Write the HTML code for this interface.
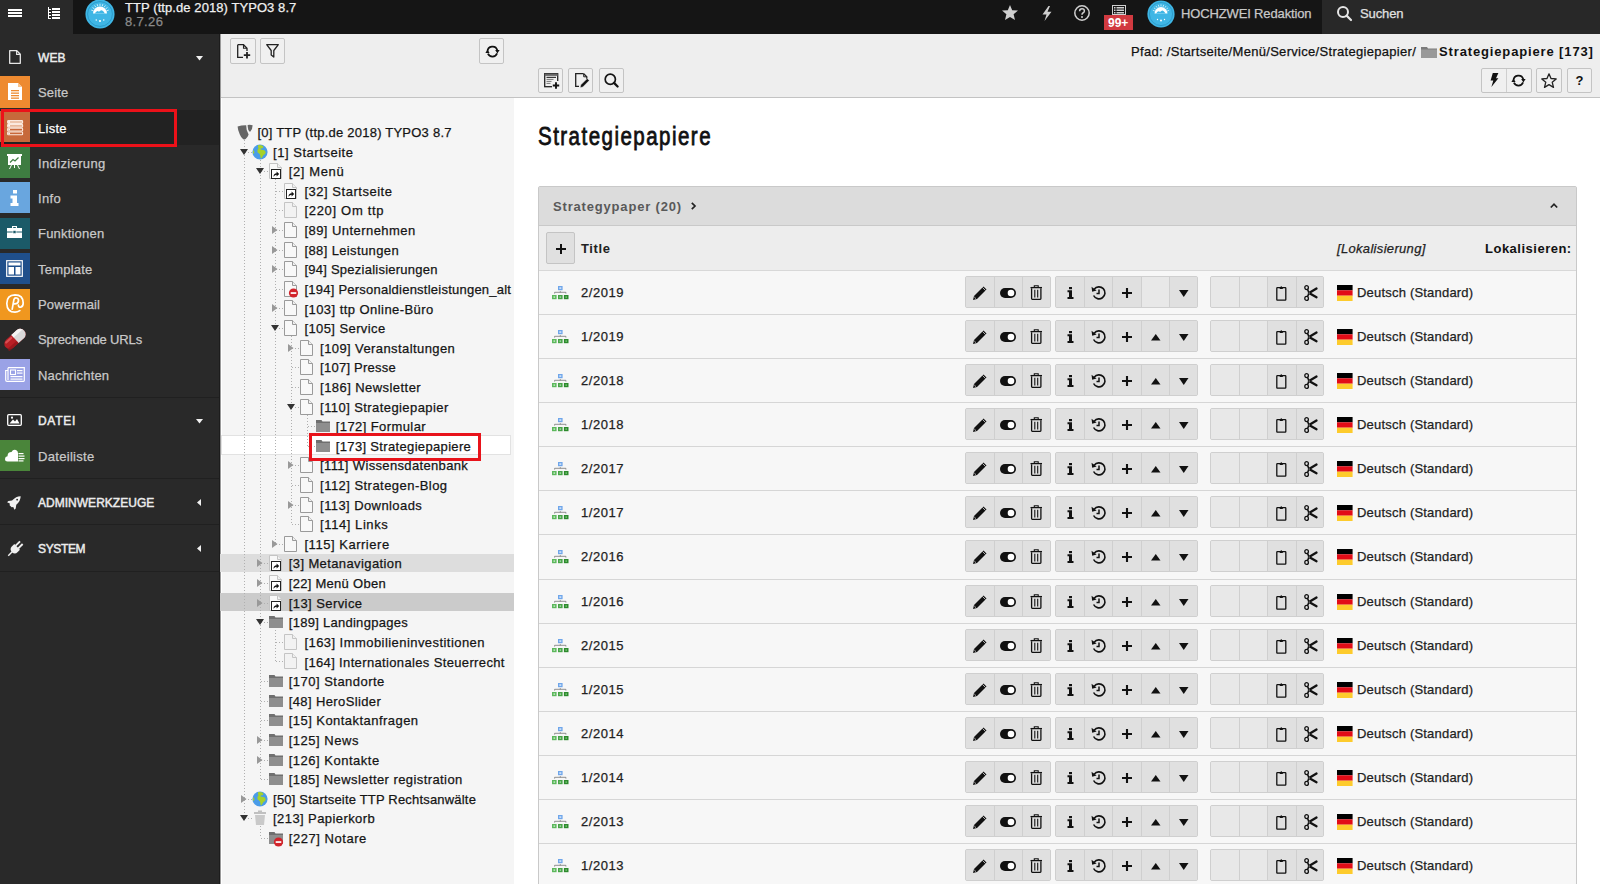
<!DOCTYPE html><html><head><meta charset="utf-8"><title>TYPO3</title><style>
*{box-sizing:border-box}
html,body{margin:0;padding:0}
body{width:1600px;height:884px;overflow:hidden;position:relative;background:#fff;font-family:"Liberation Sans",sans-serif;}
.a{position:absolute}
.t{position:absolute;white-space:nowrap;line-height:1;font-family:"Liberation Sans",sans-serif;-webkit-text-stroke:0.25px currentColor}
svg{position:absolute;overflow:visible}
.b{position:absolute;background:#ededed;border:1px solid #c6c6c6;border-radius:2px}
</style></head><body>
<div class="a" style="left:0px;top:0px;width:1600px;height:34px;background:#151515;"></div>
<div class="a" style="left:0px;top:0px;width:73px;height:34px;background:#292929;"></div>
<div class="a" style="left:1322px;top:0px;width:278px;height:34px;background:#282828;"></div>
<svg style="left:8px;top:9px" width="14" height="8" viewBox="0 0 14 8"><rect x="0" y="0" width="14" height="2" fill="#fff"/><rect x="0" y="3" width="14" height="2" fill="#fff"/><rect x="0" y="6" width="14" height="2" fill="#fff"/></svg>
<svg style="left:48px;top:7px" width="12" height="12" viewBox="0 0 12 12"><rect x="0" y="0" width="1" height="12" fill="#fff"/><rect x="1" y="2" width="2" height="1" fill="#fff"/><rect x="1" y="5" width="2" height="1" fill="#fff"/><rect x="1" y="8" width="2" height="1" fill="#fff"/><rect x="1" y="11" width="2" height="1" fill="#fff"/><rect x="4" y="1" width="8" height="2" fill="#fff"/><rect x="4" y="4" width="8" height="2" fill="#fff"/><rect x="4" y="7" width="8" height="2" fill="#fff"/><rect x="4" y="10" width="8" height="2" fill="#fff"/></svg>
<svg style="left:85px;top:-1px" width="30" height="30" viewBox="0 0 30 30"><g transform="scale(1.0714)"><circle cx="14" cy="14" r="13.6" fill="#3fb6e5"/><circle cx="14" cy="14" r="11.6" fill="none" stroke="#2a98c8" stroke-width="0.9"/><path d="M7.82 10.99 L5.82 10.34" stroke="#fff" stroke-width="0.8" opacity="0.85"/><path d="M8.74 9.18 L7.04 7.95" stroke="#fff" stroke-width="0.8" opacity="0.85"/><path d="M10.18 7.74 L8.95 6.04" stroke="#fff" stroke-width="0.8" opacity="0.85"/><path d="M11.99 6.82 L11.34 4.82" stroke="#fff" stroke-width="0.8" opacity="0.85"/><path d="M14.00 6.50 L14.00 4.40" stroke="#fff" stroke-width="0.8" opacity="0.85"/><path d="M16.01 6.82 L16.66 4.82" stroke="#fff" stroke-width="0.8" opacity="0.85"/><path d="M17.82 7.74 L19.05 6.04" stroke="#fff" stroke-width="0.8" opacity="0.85"/><path d="M19.26 9.18 L20.96 7.95" stroke="#fff" stroke-width="0.8" opacity="0.85"/><path d="M20.18 10.99 L22.18 10.34" stroke="#fff" stroke-width="0.8" opacity="0.85"/><path d="M7.5 13.5 A6.5 6.5 0 0 1 20.5 13.5 Z" fill="#fff"/><path d="M9 13.6 Q11.5 9.8 13 12 Q15.5 9 17.5 12 L18.5 13.6 Z" fill="#3fb6e5"/><circle cx="10.5" cy="19.5" r="0.7" fill="#fff"/><circle cx="14" cy="20.5" r="1" fill="#fff"/><circle cx="17.5" cy="19.5" r="0.7" fill="#fff"/></g></svg>
<div class="t" style="left:125px;top:1.05px;font-size:13px;color:#f0f0f0;font-weight:normal;letter-spacing:0.077px;">TTP (ttp.de 2018) TYPO3 8.7</div>
<div class="t" style="left:125px;top:15.25px;font-size:13px;color:#8a8a8a;font-weight:normal;letter-spacing:0.35px;">8.7.26</div>
<svg style="left:1002px;top:5px" width="16" height="15" viewBox="0 0 16 15"><path d="M8 0 L10.2 5.2 L16 5.6 L11.6 9.3 L13 15 L8 11.9 L3 15 L4.4 9.3 L0 5.6 L5.8 5.2 Z" fill="#cfcfcf"/></svg>
<svg style="left:1042px;top:6px" width="10" height="15" viewBox="0 0 10 15"><path d="M6.5 0 L0.5 8.5 L4.5 8.5 L2.5 15 L9.5 5.8 L5.5 5.8 L8 0 Z" fill="#cfcfcf"/></svg>
<svg style="left:1074px;top:5px" width="16" height="16" viewBox="0 0 16 16"><circle cx="8" cy="8" r="7.2" fill="none" stroke="#cfcfcf" stroke-width="1.5"/><path d="M5.6 6.2 Q5.6 3.8 8 3.8 Q10.4 3.8 10.4 6 Q10.4 7.3 8.9 8 Q8 8.5 8 9.8" fill="none" stroke="#cfcfcf" stroke-width="1.5"/><circle cx="8" cy="12" r="1" fill="#cfcfcf"/></svg>
<svg style="left:1112px;top:5px" width="14" height="10" viewBox="0 0 14 10"><rect x="0.5" y="0.5" width="13" height="9" fill="none" stroke="#cfcfcf" stroke-width="1"/><rect x="2" y="2" width="1.5" height="1.5" fill="#cfcfcf"/><rect x="4.5" y="2" width="7.5" height="1.5" fill="#cfcfcf"/><rect x="2" y="4.5" width="1.5" height="1.5" fill="#cfcfcf"/><rect x="4.5" y="4.5" width="7.5" height="1.5" fill="#cfcfcf"/><rect x="2" y="7" width="1.5" height="1.5" fill="#cfcfcf"/><rect x="4.5" y="7" width="7.5" height="1.5" fill="#cfcfcf"/></svg>
<div class="a" style="left:1104px;top:15px;width:29px;height:15px;background:#d13a40;"></div>
<div class="t" style="left:1108px;top:17.20px;font-size:12px;color:#fff;font-weight:bold;letter-spacing:0px;-webkit-text-stroke:0;">99+</div>
<svg style="left:1147px;top:-0.5px" width="28" height="28" viewBox="0 0 28 28"><g transform="scale(1.0000)"><circle cx="14" cy="14" r="13.6" fill="#3fb6e5"/><circle cx="14" cy="14" r="11.6" fill="none" stroke="#2a98c8" stroke-width="0.9"/><path d="M7.82 10.99 L5.82 10.34" stroke="#fff" stroke-width="0.8" opacity="0.85"/><path d="M8.74 9.18 L7.04 7.95" stroke="#fff" stroke-width="0.8" opacity="0.85"/><path d="M10.18 7.74 L8.95 6.04" stroke="#fff" stroke-width="0.8" opacity="0.85"/><path d="M11.99 6.82 L11.34 4.82" stroke="#fff" stroke-width="0.8" opacity="0.85"/><path d="M14.00 6.50 L14.00 4.40" stroke="#fff" stroke-width="0.8" opacity="0.85"/><path d="M16.01 6.82 L16.66 4.82" stroke="#fff" stroke-width="0.8" opacity="0.85"/><path d="M17.82 7.74 L19.05 6.04" stroke="#fff" stroke-width="0.8" opacity="0.85"/><path d="M19.26 9.18 L20.96 7.95" stroke="#fff" stroke-width="0.8" opacity="0.85"/><path d="M20.18 10.99 L22.18 10.34" stroke="#fff" stroke-width="0.8" opacity="0.85"/><path d="M7.5 13.5 A6.5 6.5 0 0 1 20.5 13.5 Z" fill="#fff"/><path d="M9 13.6 Q11.5 9.8 13 12 Q15.5 9 17.5 12 L18.5 13.6 Z" fill="#3fb6e5"/><circle cx="10.5" cy="19.5" r="0.7" fill="#fff"/><circle cx="14" cy="20.5" r="1" fill="#fff"/><circle cx="17.5" cy="19.5" r="0.7" fill="#fff"/></g></svg>
<div class="t" style="left:1181px;top:7.35px;font-size:13px;color:#c8c8c8;font-weight:normal;letter-spacing:-0.14px;">HOCHZWEI Redaktion</div>
<svg style="left:1337px;top:6px" width="15" height="15" viewBox="0 0 15 15"><circle cx="6" cy="6" r="5" fill="none" stroke="#e6e6e6" stroke-width="2"/><path d="M9.6 9.6 L14 14" stroke="#e6e6e6" stroke-width="2.2" stroke-linecap="round"/></svg>
<div class="t" style="left:1360px;top:7.35px;font-size:13px;color:#e0e0e0;font-weight:normal;letter-spacing:-0.1px;">Suchen</div>
<div class="a" style="left:0px;top:34px;width:220px;height:850px;background:#292929;"></div>
<div class="t" style="left:38px;top:52.20px;font-size:12px;color:#ececec;font-weight:normal;letter-spacing:0.05px;-webkit-text-stroke:0.45px #ececec">WEB</div>
<svg style="left:9px;top:50px" width="12" height="14" viewBox="0 0 12 14"><path d="M0.7 0.7 H7.8 L11.3 4.2 V13.3 H0.7 Z" fill="none" stroke="#e6e6e6" stroke-width="1.3" stroke-linejoin="round"/><path d="M7.6 0.9 V4.4 H11.1" fill="none" stroke="#e6e6e6" stroke-width="1.1"/></svg>
<svg style="left:195.5px;top:56px" width="7" height="4.5" viewBox="0 0 7 4.5"><path d="M0 0 L7 0 L3.5 4.5 Z" fill="#f0f0f0"/></svg>
<div class="a" style="left:0px;top:76px;width:30px;height:32px;background:#ee8a30;"></div>
<svg style="left:8px;top:83px" width="14" height="17" viewBox="0 0 14 17"><path d="M0 0 H10 L14 4 V17 H0 Z" fill="#fff"/><path d="M10 0 V4 H14 Z" fill="#f7c48f"/><rect x="3" y="7" width="8" height="1.3" fill="#ee8a30"/><rect x="3" y="9.5" width="8" height="1.3" fill="#ee8a30"/><rect x="3" y="12" width="8" height="1.3" fill="#ee8a30"/><rect x="3" y="14.5" width="8" height="1.3" fill="#ee8a30"/></svg>
<div class="t" style="left:38px;top:86.05px;font-size:13px;color:#c8c8c8;font-weight:normal;letter-spacing:0.175px;">Seite</div>
<div class="a" style="left:0px;top:110px;width:220px;height:35px;background:#222222;"></div>
<div class="a" style="left:0px;top:111px;width:30px;height:31px;background:#c7693b;"></div>
<svg style="left:7px;top:120px" width="16" height="15" viewBox="0 0 16 15"><rect x="0.6" y="0.6" width="15" height="2.8" rx="0.8" fill="#e9b89c" stroke="#fbe9df" stroke-width="1.1"/><rect x="1.3" y="1.2" width="1.6" height="1.6" fill="#fff"/><rect x="0.6" y="4.4" width="15" height="2.8" rx="0.8" fill="#e9b89c" stroke="#fbe9df" stroke-width="1.1"/><rect x="1.3" y="5.0" width="1.6" height="1.6" fill="#fff"/><rect x="0.6" y="8.2" width="15" height="2.8" rx="0.8" fill="#c9683b" stroke="#fbe9df" stroke-width="1.1"/><rect x="1.3" y="8.8" width="1.6" height="1.6" fill="#fff"/><rect x="0.6" y="12.0" width="15" height="2.8" rx="0.8" fill="#c9683b" stroke="#fbe9df" stroke-width="1.1"/><rect x="1.3" y="12.6" width="1.6" height="1.6" fill="#fff"/></svg>
<div class="t" style="left:38px;top:122.05px;font-size:13px;color:#fff;font-weight:normal;letter-spacing:0.275px;">Liste</div>
<div class="a" style="left:0px;top:147px;width:30px;height:31px;background:#3e7c41;"></div>
<svg style="left:7px;top:154px" width="15" height="17" viewBox="0 0 15 17"><rect x="0" y="0" width="15" height="2" fill="#fff"/><rect x="1" y="2" width="13" height="9" fill="#fff"/><path d="M3 8.5 L6 5.5 L8 7 L11.5 3.5" fill="none" stroke="#3e7c41" stroke-width="1.2"/><path d="M4.5 11 L2.5 15 M10.5 11 L12.5 15 M7.5 11 V14" stroke="#fff" stroke-width="1"/></svg>
<div class="t" style="left:38px;top:157.05px;font-size:13px;color:#c8c8c8;font-weight:normal;letter-spacing:0.37px;">Indizierung</div>
<div class="a" style="left:0px;top:182px;width:30px;height:31px;background:#69a6df;"></div>
<svg style="left:10px;top:190px" width="9" height="16" viewBox="0 0 9 16"><rect x="3" y="0" width="4" height="3.5" fill="#fff"/><path d="M0.5 5.5 H7 V13 H8.5 V16 H0.5 V13 H2.5 V8.5 H0.5 Z" fill="#fff"/></svg>
<div class="t" style="left:38px;top:192.05px;font-size:13px;color:#c8c8c8;font-weight:normal;letter-spacing:0.33px;">Info</div>
<div class="a" style="left:0px;top:218px;width:30px;height:31px;background:#1b5a68;"></div>
<svg style="left:7px;top:226px" width="15" height="12" viewBox="0 0 15 12"><path d="M5 0 H10 V2 H15 V5.5 H0 V2 H5 Z M6.2 1 V2 H8.8 V1 Z" fill="#fff"/><rect x="0" y="6.5" width="15" height="5.5" fill="#fff"/><rect x="6" y="4.5" width="3" height="3" fill="#1b5a68" stroke="#fff" stroke-width="0.6"/></svg>
<div class="t" style="left:38px;top:227.05px;font-size:13px;color:#c8c8c8;font-weight:normal;letter-spacing:0.2px;">Funktionen</div>
<div class="a" style="left:0px;top:253px;width:30px;height:31px;background:#1f4f8b;"></div>
<svg style="left:6px;top:260px" width="17" height="17" viewBox="0 0 17 17"><rect x="0.7" y="0.7" width="15.6" height="15.6" fill="none" stroke="#fff" stroke-width="1.2"/><rect x="2.5" y="2.5" width="12" height="3" fill="#fff"/><rect x="2.5" y="7" width="5.5" height="7.5" fill="#fff"/><rect x="9.5" y="7" width="5" height="7.5" fill="#fff"/></svg>
<div class="t" style="left:38px;top:263.05px;font-size:13px;color:#c8c8c8;font-weight:normal;letter-spacing:0.214px;">Template</div>
<div class="a" style="left:0px;top:289px;width:30px;height:31px;background:#f0971f;"></div>
<svg style="left:5px;top:293px" width="20" height="21" viewBox="0 0 20 21"><path d="M14.8 17.6 Q12.5 19.2 10 19.2 Q2 19.2 1.8 10.5 Q1.8 2 10 1.8 Q18.2 1.8 18.2 10 Q18.2 13.6 15.6 14.2 Q13.6 14.5 13.4 12.2" fill="none" stroke="#fff" stroke-width="1.7" stroke-linecap="round"/><path d="M7.2 16.2 L8.9 6.6 Q9.6 4.6 11.6 5 Q14 5.6 13.4 8.3 Q12.8 11 9.2 10.8" fill="none" stroke="#fff" stroke-width="1.7" stroke-linecap="round" stroke-linejoin="round"/></svg>
<div class="t" style="left:38px;top:298.05px;font-size:13px;color:#c8c8c8;font-weight:normal;letter-spacing:0.162px;">Powermail</div>
<svg style="left:2px;top:326px" width="26" height="26" viewBox="0 0 26 26"><g transform="rotate(-42 13 13)"><rect x="0.5" y="7.6" width="25" height="10.8" rx="5.4" fill="#b81f25"/><path d="M13 7.6 H20.1 A5.4 5.4 0 0 1 20.1 18.4 H13 Z" fill="#d9d9d9"/><path d="M13 7.6 H20.1 A5.4 5.4 0 0 1 25 11 H13 Z" fill="#f4f4f4"/><rect x="3" y="8.6" width="9" height="2.2" rx="1.1" fill="#e05a5e" opacity="0.8"/><rect x="0.5" y="15.5" width="12.5" height="2.9" rx="1.4" fill="#8e1418" opacity="0.7"/></g></svg>
<div class="t" style="left:38px;top:333.05px;font-size:13px;color:#c8c8c8;font-weight:normal;letter-spacing:-0.15px;">Sprechende URLs</div>
<div class="a" style="left:0px;top:359px;width:30px;height:31px;background:#9aa2e6;"></div>
<svg style="left:5px;top:367px" width="20" height="15" viewBox="0 0 20 15"><path d="M3 0.7 H19.3 V13.5 Q19.3 14.3 18.5 14.3 H2 Q0.7 14.3 0.7 13 V3.5 H3" fill="none" stroke="#fff" stroke-width="1.2"/><path d="M3 0.7 V13" stroke="#fff" stroke-width="1.2"/><rect x="5.5" y="3" width="5" height="4.5" fill="none" stroke="#fff" stroke-width="1.1"/><rect x="12" y="3" width="5.5" height="1.2" fill="#fff"/><rect x="12" y="5.5" width="5.5" height="1.2" fill="#fff"/><rect x="5.5" y="9" width="12" height="1.2" fill="#fff"/><rect x="5.5" y="11.5" width="12" height="1.2" fill="#fff"/></svg>
<div class="t" style="left:38px;top:369.05px;font-size:13px;color:#c8c8c8;font-weight:normal;letter-spacing:0.17px;">Nachrichten</div>
<div class="a" style="left:0px;top:397px;width:220px;height:1px;background:#202020;"></div>
<div class="t" style="left:38px;top:415.20px;font-size:12px;color:#ececec;font-weight:normal;letter-spacing:0.7px;-webkit-text-stroke:0.45px #ececec">DATEI</div>
<svg style="left:7px;top:414px" width="15" height="12" viewBox="0 0 15 12"><rect x="0.7" y="0.7" width="13.6" height="10.6" rx="1" fill="none" stroke="#fff" stroke-width="1.3"/><path d="M2.5 9.5 L6 5.5 L8 7.5 L10 5 L12.5 9.5 Z" fill="#fff"/><circle cx="5" cy="3.7" r="1.1" fill="#fff"/></svg>
<svg style="left:195.5px;top:419px" width="7" height="4.5" viewBox="0 0 7 4.5"><path d="M0 0 L7 0 L3.5 4.5 Z" fill="#f0f0f0"/></svg>
<div class="a" style="left:0px;top:440px;width:30px;height:31px;background:#4a853a;"></div>
<svg style="left:5px;top:449px" width="20" height="13" viewBox="0 0 20 13"><path d="M2.5 12.5 Q0 12.5 0 10 Q0 7.5 2.5 7.3 Q2.5 3 6.5 3 Q8 0 11 1 Q13 2 13 4 V12.5 Z" fill="#fff"/><rect x="13.5" y="4" width="5" height="1.2" fill="#fff"/><rect x="13.5" y="6.5" width="6" height="1.2" fill="#fff"/><rect x="13.5" y="9" width="6" height="1.2" fill="#fff"/><rect x="13.5" y="11.3" width="5" height="1.2" fill="#fff"/></svg>
<div class="t" style="left:38px;top:449.65px;font-size:13px;color:#c8c8c8;font-weight:normal;letter-spacing:0.31px;">Dateiliste</div>
<div class="a" style="left:0px;top:478px;width:220px;height:1px;background:#202020;"></div>
<div class="t" style="left:38px;top:497.20px;font-size:12px;color:#ececec;font-weight:normal;letter-spacing:0.02px;-webkit-text-stroke:0.45px #ececec">ADMINWERKZEUGE</div>
<svg style="left:5px;top:492px" width="20" height="20" viewBox="0 0 20 20"><g transform="translate(10 9.8) rotate(45)"><path d="M0 -8 Q3.2 -5 3 1.2 L5.2 4.2 L5.2 6 L2.4 4.9 L1.4 6.2 H-1.4 L-2.4 4.9 L-5.2 6 L-5.2 4.2 L-3 1.2 Q-3.2 -5 0 -8 Z" fill="#f0f0f0"/><circle cx="0" cy="-3" r="0.9" fill="#292929"/></g></svg>
<svg style="left:197.2px;top:498.5px" width="4" height="7" viewBox="0 0 4 7"><path d="M4 0 L4 7 L0 3.5 Z" fill="#f0f0f0"/></svg>
<div class="a" style="left:0px;top:524px;width:220px;height:1px;background:#202020;"></div>
<div class="t" style="left:38px;top:543.20px;font-size:12px;color:#ececec;font-weight:normal;letter-spacing:-0.36px;-webkit-text-stroke:0.45px #ececec">SYSTEM</div>
<svg style="left:5px;top:538px" width="20" height="20" viewBox="0 0 20 20"><g transform="translate(11.4 9.6) rotate(45)"><rect x="-2.8" y="-7" width="1.9" height="6.5" fill="#f0f0f0"/><rect x="0.9" y="-7" width="1.9" height="6.5" fill="#f0f0f0"/><path d="M-4 -1 H4 V2.5 Q4 6 0 6.5 Q-4 6 -4 2.5 Z" fill="#f0f0f0"/><rect x="-0.7" y="6" width="1.4" height="5.5" fill="#f0f0f0"/></g></svg>
<svg style="left:197.2px;top:544.5px" width="4" height="7" viewBox="0 0 4 7"><path d="M4 0 L4 7 L0 3.5 Z" fill="#f0f0f0"/></svg>
<div class="a" style="left:0px;top:571px;width:220px;height:1px;background:#202020;"></div>
<div class="a" style="left:0.6px;top:108.7px;width:176.2px;height:38px;border:3.7px solid #ec1119"></div>
<div class="a" style="left:220px;top:34px;width:294px;height:850px;background:#f5f5f5;"></div>
<div class="a" style="left:220px;top:34px;width:1380px;height:63px;background:#eeeeee;"></div>
<div class="a" style="left:220px;top:97px;width:1380px;height:1px;background:#c3c3c3;"></div>
<div class="a" style="left:219px;top:34px;width:1px;height:850px;background:#1c1c1c;"></div>
<div class="a" style="left:220px;top:34px;width:1px;height:850px;background:#9a9a9a;"></div>
<div class="a" style="left:221px;top:98px;width:1px;height:786px;background:#ffffff;"></div>
<div class="a" style="left:230px;top:38px;width:26px;height:26px;background:#f0f0f0;border:1px solid #c4c4c4;border-radius:2px;"></div>
<svg style="left:237px;top:44px" width="13" height="15" viewBox="0 0 13 15"><path d="M0.7 0.7 H6.5 L10 4.2 V7" fill="none" stroke="#222" stroke-width="1.3"/><path d="M6.5 0.7 V4.2 H10" fill="none" stroke="#222" stroke-width="1.1"/><path d="M0.7 0.7 V13.3 H6" fill="none" stroke="#222" stroke-width="1.3"/><path d="M10 8 V14.5 M6.8 11.2 H13.2" stroke="#222" stroke-width="1.8"/></svg>
<div class="a" style="left:260px;top:38px;width:25px;height:26px;background:#f0f0f0;border:1px solid #c4c4c4;border-radius:2px;"></div>
<svg style="left:266px;top:44px" width="13" height="14" viewBox="0 0 13 14"><path d="M0.7 0.7 H12.3 L7.8 6.5 V13 L5.2 11 V6.5 Z" fill="none" stroke="#222" stroke-width="1.3" stroke-linejoin="round"/></svg>
<div class="a" style="left:479px;top:38px;width:25px;height:26px;background:#f0f0f0;border:1px solid #c4c4c4;border-radius:2px;"></div>
<svg style="left:484.5px;top:44.5px" width="15" height="13" viewBox="0 0 15 13"><path d="M2.5 6.5 A5 5 0 0 1 12.3 5.2" fill="none" stroke="#111" stroke-width="1.7"/><path d="M10.2 5 L14.6 5 L12.4 8.6 Z" fill="#111"/><path d="M12.1 8.4 A5 5 0 0 1 2.9 8.6" fill="none" stroke="#111" stroke-width="1.7"/><path d="M0.4 8 L4.6 8 L2.5 4.4 Z" fill="#111"/></svg>
<div class="a" style="left:538px;top:68px;width:25px;height:25px;background:#f0f0f0;border:1px solid #c4c4c4;border-radius:2px;"></div>
<div class="a" style="left:568px;top:68px;width:25px;height:25px;background:#f0f0f0;border:1px solid #c4c4c4;border-radius:2px;"></div>
<div class="a" style="left:599px;top:68px;width:25px;height:25px;background:#f0f0f0;border:1px solid #c4c4c4;border-radius:2px;"></div>
<svg style="left:544px;top:73px" width="16" height="16" viewBox="0 0 16 16"><rect x="0.7" y="0.7" width="13" height="13" fill="none" stroke="#222" stroke-width="1.3"/><rect x="0.7" y="0.7" width="13" height="2.2" fill="#666"/><rect x="2.5" y="3.8" width="9.5" height="1.1" fill="#222"/><rect x="2.5" y="5.9" width="7" height="1" fill="#777"/><rect x="2.5" y="7.9" width="5" height="1" fill="#777"/><rect x="2.5" y="9.9" width="4" height="1" fill="#777"/><rect x="8" y="8" width="8.5" height="8.5" fill="#f0f0f0"/><path d="M12 9.3 V15.7 M8.8 12.5 H15.2" stroke="#111" stroke-width="1.9"/></svg>
<svg style="left:575px;top:73px" width="15" height="16" viewBox="0 0 15 16"><path d="M8.7 0.7 H0.7 V13.3 H4" fill="none" stroke="#222" stroke-width="1.3"/><path d="M8.7 0.7 L11.8 3.8 V6" fill="none" stroke="#222" stroke-width="1.3"/><path d="M8.7 0.9 V3.8 H11.6" fill="none" stroke="#222" stroke-width="1"/><path d="M5 14.8 L5.8 11.8 L12.2 5.4 L14.3 7.5 L7.9 13.9 Z" fill="#111" stroke="#f0f0f0" stroke-width="0.6"/></svg>
<svg style="left:604px;top:73px" width="15" height="15" viewBox="0 0 15 15"><circle cx="6.3" cy="6.2" r="5.1" fill="none" stroke="#151515" stroke-width="1.7"/><path d="M10 9.9 L13.6 13.5" stroke="#151515" stroke-width="2.3" stroke-linecap="round"/></svg>
<div class="a" style="left:1481px;top:68px;width:51px;height:25px;background:#f0f0f0;border:1px solid #c4c4c4;border-radius:2px;"></div>
<div class="a" style="left:1506px;top:69px;width:1px;height:23px;background:#cfcfcf;"></div>
<svg style="left:1490px;top:73.3px" width="9" height="14" viewBox="0 0 9 14"><path d="M2.8 0 H8.4 L6 5.2 H8.4 L1.4 14 L3.3 7.4 H0.6 Z" fill="#111"/></svg>
<svg style="left:1511.2px;top:74px" width="15" height="13" viewBox="0 0 15 13"><path d="M2.5 6.5 A5 5 0 0 1 12.3 5.2" fill="none" stroke="#111" stroke-width="1.7"/><path d="M10.2 5 L14.6 5 L12.4 8.6 Z" fill="#111"/><path d="M12.1 8.4 A5 5 0 0 1 2.9 8.6" fill="none" stroke="#111" stroke-width="1.7"/><path d="M0.4 8 L4.6 8 L2.5 4.4 Z" fill="#111"/></svg>
<div class="a" style="left:1536px;top:68px;width:26px;height:25px;background:#f0f0f0;border:1px solid #c4c4c4;border-radius:2px;"></div>
<svg style="left:1541px;top:73px" width="16" height="15" viewBox="0 0 16 15"><path d="M8 0.8 L10 5.5 L15.2 5.9 L11.2 9.2 L12.5 14.4 L8 11.6 L3.5 14.4 L4.8 9.2 L0.8 5.9 L6 5.5 Z" fill="none" stroke="#222" stroke-width="1.3" stroke-linejoin="round"/></svg>
<div class="a" style="left:1567px;top:68px;width:25px;height:25px;background:#f0f0f0;border:1px solid #c4c4c4;border-radius:2px;"></div>
<div class="t" style="left:1575.6px;top:73.85px;font-size:13px;color:#111;font-weight:bold;letter-spacing:0px;-webkit-text-stroke:0;">?</div>
<div class="t" style="left:1131px;top:45.05px;font-size:13px;color:#111;font-weight:normal;letter-spacing:0.3px;">Pfad: /Startseite/Menü/Service/Strategiepapier/</div>
<svg style="left:1421px;top:47px" width="16" height="11" viewBox="0 0 16 11"><path d="M0 0 H6 L7 1.5 H16 V11 H0 Z" fill="#7a7a7a"/><rect x="0" y="2.5" width="16" height="8.5" fill="#999"/></svg>
<div class="t" style="left:1439px;top:45.25px;font-size:13px;color:#111;font-weight:bold;letter-spacing:0.86px;-webkit-text-stroke:0;">Strategiepapiere [173]</div>
<div class="a" style="left:220px;top:553.5px;width:294px;height:18.3px;background:#dddddd;"></div>
<div class="a" style="left:220px;top:592.5px;width:294px;height:18.5px;background:#cbcbcb;"></div>
<div class="a" style="left:221px;top:435px;width:290px;height:20px;background:#fff;border:1px solid #e2e2e2"></div>
<div class="a" style="left:244px;top:140.0px;width:1px;height:11.6px;background:repeating-linear-gradient(to bottom,#b0b0b0 0 1px,transparent 1px 3px)"></div>
<div class="a" style="left:245px;top:152px;width:8px;height:1px;background:repeating-linear-gradient(to right,#b0b0b0 0 1px,transparent 1px 3px)"></div>
<div class="a" style="left:260px;top:159.6px;width:1px;height:11.6px;background:repeating-linear-gradient(to bottom,#b0b0b0 0 1px,transparent 1px 3px)"></div>
<div class="a" style="left:261px;top:171px;width:8px;height:1px;background:repeating-linear-gradient(to right,#b0b0b0 0 1px,transparent 1px 3px)"></div>
<div class="a" style="left:275px;top:179.2px;width:1px;height:11.6px;background:repeating-linear-gradient(to bottom,#b0b0b0 0 1px,transparent 1px 3px)"></div>
<div class="a" style="left:276px;top:191px;width:8px;height:1px;background:repeating-linear-gradient(to right,#b0b0b0 0 1px,transparent 1px 3px)"></div>
<div class="a" style="left:275px;top:179.2px;width:1px;height:31.2px;background:repeating-linear-gradient(to bottom,#b0b0b0 0 1px,transparent 1px 3px)"></div>
<div class="a" style="left:276px;top:210px;width:8px;height:1px;background:repeating-linear-gradient(to right,#b0b0b0 0 1px,transparent 1px 3px)"></div>
<div class="a" style="left:275px;top:179.2px;width:1px;height:50.8px;background:repeating-linear-gradient(to bottom,#b0b0b0 0 1px,transparent 1px 3px)"></div>
<div class="a" style="left:276px;top:230px;width:8px;height:1px;background:repeating-linear-gradient(to right,#b0b0b0 0 1px,transparent 1px 3px)"></div>
<div class="a" style="left:275px;top:179.2px;width:1px;height:70.4px;background:repeating-linear-gradient(to bottom,#b0b0b0 0 1px,transparent 1px 3px)"></div>
<div class="a" style="left:276px;top:250px;width:8px;height:1px;background:repeating-linear-gradient(to right,#b0b0b0 0 1px,transparent 1px 3px)"></div>
<div class="a" style="left:275px;top:179.2px;width:1px;height:90.0px;background:repeating-linear-gradient(to bottom,#b0b0b0 0 1px,transparent 1px 3px)"></div>
<div class="a" style="left:276px;top:269px;width:8px;height:1px;background:repeating-linear-gradient(to right,#b0b0b0 0 1px,transparent 1px 3px)"></div>
<div class="a" style="left:275px;top:179.2px;width:1px;height:109.7px;background:repeating-linear-gradient(to bottom,#b0b0b0 0 1px,transparent 1px 3px)"></div>
<div class="a" style="left:276px;top:289px;width:8px;height:1px;background:repeating-linear-gradient(to right,#b0b0b0 0 1px,transparent 1px 3px)"></div>
<div class="a" style="left:275px;top:179.2px;width:1px;height:129.3px;background:repeating-linear-gradient(to bottom,#b0b0b0 0 1px,transparent 1px 3px)"></div>
<div class="a" style="left:276px;top:308px;width:8px;height:1px;background:repeating-linear-gradient(to right,#b0b0b0 0 1px,transparent 1px 3px)"></div>
<div class="a" style="left:275px;top:179.2px;width:1px;height:148.9px;background:repeating-linear-gradient(to bottom,#b0b0b0 0 1px,transparent 1px 3px)"></div>
<div class="a" style="left:276px;top:328px;width:8px;height:1px;background:repeating-linear-gradient(to right,#b0b0b0 0 1px,transparent 1px 3px)"></div>
<div class="a" style="left:291px;top:336.1px;width:1px;height:11.6px;background:repeating-linear-gradient(to bottom,#b0b0b0 0 1px,transparent 1px 3px)"></div>
<div class="a" style="left:292px;top:348px;width:8px;height:1px;background:repeating-linear-gradient(to right,#b0b0b0 0 1px,transparent 1px 3px)"></div>
<div class="a" style="left:291px;top:336.1px;width:1px;height:31.2px;background:repeating-linear-gradient(to bottom,#b0b0b0 0 1px,transparent 1px 3px)"></div>
<div class="a" style="left:292px;top:367px;width:8px;height:1px;background:repeating-linear-gradient(to right,#b0b0b0 0 1px,transparent 1px 3px)"></div>
<div class="a" style="left:291px;top:336.1px;width:1px;height:50.8px;background:repeating-linear-gradient(to bottom,#b0b0b0 0 1px,transparent 1px 3px)"></div>
<div class="a" style="left:292px;top:387px;width:8px;height:1px;background:repeating-linear-gradient(to right,#b0b0b0 0 1px,transparent 1px 3px)"></div>
<div class="a" style="left:291px;top:336.1px;width:1px;height:70.4px;background:repeating-linear-gradient(to bottom,#b0b0b0 0 1px,transparent 1px 3px)"></div>
<div class="a" style="left:292px;top:407px;width:8px;height:1px;background:repeating-linear-gradient(to right,#b0b0b0 0 1px,transparent 1px 3px)"></div>
<div class="a" style="left:307px;top:414.5px;width:1px;height:11.6px;background:repeating-linear-gradient(to bottom,#b0b0b0 0 1px,transparent 1px 3px)"></div>
<div class="a" style="left:308px;top:426px;width:8px;height:1px;background:repeating-linear-gradient(to right,#b0b0b0 0 1px,transparent 1px 3px)"></div>
<div class="a" style="left:307px;top:414.5px;width:1px;height:31.2px;background:repeating-linear-gradient(to bottom,#b0b0b0 0 1px,transparent 1px 3px)"></div>
<div class="a" style="left:308px;top:446px;width:8px;height:1px;background:repeating-linear-gradient(to right,#b0b0b0 0 1px,transparent 1px 3px)"></div>
<div class="a" style="left:291px;top:336.1px;width:1px;height:129.3px;background:repeating-linear-gradient(to bottom,#b0b0b0 0 1px,transparent 1px 3px)"></div>
<div class="a" style="left:292px;top:465px;width:8px;height:1px;background:repeating-linear-gradient(to right,#b0b0b0 0 1px,transparent 1px 3px)"></div>
<div class="a" style="left:291px;top:336.1px;width:1px;height:148.9px;background:repeating-linear-gradient(to bottom,#b0b0b0 0 1px,transparent 1px 3px)"></div>
<div class="a" style="left:292px;top:485px;width:8px;height:1px;background:repeating-linear-gradient(to right,#b0b0b0 0 1px,transparent 1px 3px)"></div>
<div class="a" style="left:291px;top:336.1px;width:1px;height:168.5px;background:repeating-linear-gradient(to bottom,#b0b0b0 0 1px,transparent 1px 3px)"></div>
<div class="a" style="left:292px;top:505px;width:8px;height:1px;background:repeating-linear-gradient(to right,#b0b0b0 0 1px,transparent 1px 3px)"></div>
<div class="a" style="left:291px;top:336.1px;width:1px;height:188.1px;background:repeating-linear-gradient(to bottom,#b0b0b0 0 1px,transparent 1px 3px)"></div>
<div class="a" style="left:292px;top:524px;width:8px;height:1px;background:repeating-linear-gradient(to right,#b0b0b0 0 1px,transparent 1px 3px)"></div>
<div class="a" style="left:275px;top:179.2px;width:1px;height:364.6px;background:repeating-linear-gradient(to bottom,#b0b0b0 0 1px,transparent 1px 3px)"></div>
<div class="a" style="left:276px;top:544px;width:8px;height:1px;background:repeating-linear-gradient(to right,#b0b0b0 0 1px,transparent 1px 3px)"></div>
<div class="a" style="left:260px;top:159.6px;width:1px;height:403.8px;background:repeating-linear-gradient(to bottom,#b0b0b0 0 1px,transparent 1px 3px)"></div>
<div class="a" style="left:261px;top:563px;width:8px;height:1px;background:repeating-linear-gradient(to right,#b0b0b0 0 1px,transparent 1px 3px)"></div>
<div class="a" style="left:260px;top:159.6px;width:1px;height:423.4px;background:repeating-linear-gradient(to bottom,#b0b0b0 0 1px,transparent 1px 3px)"></div>
<div class="a" style="left:261px;top:583px;width:8px;height:1px;background:repeating-linear-gradient(to right,#b0b0b0 0 1px,transparent 1px 3px)"></div>
<div class="a" style="left:260px;top:159.6px;width:1px;height:443.0px;background:repeating-linear-gradient(to bottom,#b0b0b0 0 1px,transparent 1px 3px)"></div>
<div class="a" style="left:261px;top:603px;width:8px;height:1px;background:repeating-linear-gradient(to right,#b0b0b0 0 1px,transparent 1px 3px)"></div>
<div class="a" style="left:260px;top:159.6px;width:1px;height:462.6px;background:repeating-linear-gradient(to bottom,#b0b0b0 0 1px,transparent 1px 3px)"></div>
<div class="a" style="left:261px;top:622px;width:8px;height:1px;background:repeating-linear-gradient(to right,#b0b0b0 0 1px,transparent 1px 3px)"></div>
<div class="a" style="left:275px;top:630.2px;width:1px;height:11.6px;background:repeating-linear-gradient(to bottom,#b0b0b0 0 1px,transparent 1px 3px)"></div>
<div class="a" style="left:276px;top:642px;width:8px;height:1px;background:repeating-linear-gradient(to right,#b0b0b0 0 1px,transparent 1px 3px)"></div>
<div class="a" style="left:275px;top:630.2px;width:1px;height:31.2px;background:repeating-linear-gradient(to bottom,#b0b0b0 0 1px,transparent 1px 3px)"></div>
<div class="a" style="left:276px;top:661px;width:8px;height:1px;background:repeating-linear-gradient(to right,#b0b0b0 0 1px,transparent 1px 3px)"></div>
<div class="a" style="left:260px;top:159.6px;width:1px;height:521.5px;background:repeating-linear-gradient(to bottom,#b0b0b0 0 1px,transparent 1px 3px)"></div>
<div class="a" style="left:261px;top:681px;width:8px;height:1px;background:repeating-linear-gradient(to right,#b0b0b0 0 1px,transparent 1px 3px)"></div>
<div class="a" style="left:260px;top:159.6px;width:1px;height:541.1px;background:repeating-linear-gradient(to bottom,#b0b0b0 0 1px,transparent 1px 3px)"></div>
<div class="a" style="left:261px;top:701px;width:8px;height:1px;background:repeating-linear-gradient(to right,#b0b0b0 0 1px,transparent 1px 3px)"></div>
<div class="a" style="left:260px;top:159.6px;width:1px;height:560.7px;background:repeating-linear-gradient(to bottom,#b0b0b0 0 1px,transparent 1px 3px)"></div>
<div class="a" style="left:261px;top:720px;width:8px;height:1px;background:repeating-linear-gradient(to right,#b0b0b0 0 1px,transparent 1px 3px)"></div>
<div class="a" style="left:260px;top:159.6px;width:1px;height:580.3px;background:repeating-linear-gradient(to bottom,#b0b0b0 0 1px,transparent 1px 3px)"></div>
<div class="a" style="left:261px;top:740px;width:8px;height:1px;background:repeating-linear-gradient(to right,#b0b0b0 0 1px,transparent 1px 3px)"></div>
<div class="a" style="left:260px;top:159.6px;width:1px;height:599.9px;background:repeating-linear-gradient(to bottom,#b0b0b0 0 1px,transparent 1px 3px)"></div>
<div class="a" style="left:261px;top:760px;width:8px;height:1px;background:repeating-linear-gradient(to right,#b0b0b0 0 1px,transparent 1px 3px)"></div>
<div class="a" style="left:260px;top:159.6px;width:1px;height:619.5px;background:repeating-linear-gradient(to bottom,#b0b0b0 0 1px,transparent 1px 3px)"></div>
<div class="a" style="left:261px;top:779px;width:8px;height:1px;background:repeating-linear-gradient(to right,#b0b0b0 0 1px,transparent 1px 3px)"></div>
<div class="a" style="left:244px;top:140.0px;width:1px;height:658.7px;background:repeating-linear-gradient(to bottom,#b0b0b0 0 1px,transparent 1px 3px)"></div>
<div class="a" style="left:245px;top:799px;width:8px;height:1px;background:repeating-linear-gradient(to right,#b0b0b0 0 1px,transparent 1px 3px)"></div>
<div class="a" style="left:244px;top:140.0px;width:1px;height:678.4px;background:repeating-linear-gradient(to bottom,#b0b0b0 0 1px,transparent 1px 3px)"></div>
<div class="a" style="left:245px;top:818px;width:8px;height:1px;background:repeating-linear-gradient(to right,#b0b0b0 0 1px,transparent 1px 3px)"></div>
<div class="a" style="left:260px;top:826.4px;width:1px;height:11.6px;background:repeating-linear-gradient(to bottom,#b0b0b0 0 1px,transparent 1px 3px)"></div>
<div class="a" style="left:261px;top:838px;width:8px;height:1px;background:repeating-linear-gradient(to right,#b0b0b0 0 1px,transparent 1px 3px)"></div>
<svg style="left:237px;top:124px" width="16" height="16" viewBox="0 0 16 16"><path d="M0.6 2.6 Q4.5 1.2 9.2 1.3 Q9 6.5 11.6 10.6 Q10 14.8 7.4 15.6 Q5 15.2 2.8 10.5 Q0.8 6.5 0.6 2.6 Z" fill="#666"/><path d="M10.6 1 Q12.8 0.4 15.6 1.2 Q15.6 5.2 13.2 7.8 Q12 7.6 11.3 5.8 Q10.6 3.6 10.6 1 Z" fill="#666"/></svg>
<div class="t" style="left:257.4px;top:126.05px;font-size:13px;color:#151515;font-weight:normal;letter-spacing:0.23px;">[0] TTP (ttp.de 2018) TYPO3 8.7</div>
<svg style="left:252px;top:144px" width="16" height="16" viewBox="0 0 16 16"><circle cx="8" cy="8" r="7.6" fill="#4a9ce8"/><path d="M6 1.2 Q9 0.6 11 2 Q12 3.5 10.5 4.2 Q8.8 4 8.2 5 Q9.2 6 11 6 Q13.8 6.3 13.6 9 Q13 10.5 11.5 11 Q10.5 12.5 9.3 14.6 Q8.2 14 8.4 12 Q8 10 6.8 9.3 Q5.2 8.8 5.4 7 Q5.2 5.2 6.6 4.4 Q5.6 3 6 1.2 Z" fill="#a6d22b"/><path d="M1.2 6 Q2.2 6.6 2.4 8.6 Q2 10 1.4 10.2 Q0.6 8 1.2 6 Z" fill="#a6d22b"/></svg>
<svg style="left:240px;top:149px" width="8" height="6" viewBox="0 0 8 6"><path d="M0 0 H8 L4 6 Z" fill="#333"/></svg>
<div class="t" style="left:273.08px;top:145.66px;font-size:13px;color:#151515;font-weight:normal;letter-spacing:0.531px;">[1] Startseite</div>
<svg style="left:268px;top:163px" width="16" height="16" viewBox="0 0 16 16"><path d="M1.5 0.5 H9.5 L13.5 4.5 V15.5 H1.5 Z" fill="#f8f8f8" stroke="#c4c4c4" stroke-width="1"/><path d="M9.5 0.5 V4.5 H13.5" fill="#f0f0f0" stroke="#c4c4c4" stroke-width="1"/><rect x="3.5" y="6.5" width="9" height="9" fill="#fff" stroke="#222" stroke-width="1"/><path d="M5.5 13.8 Q5.5 10.3 8.6 10.3 V8.6 L11.2 11 L8.6 13.4 V11.8 Q7 11.8 5.5 13.8 Z" fill="#111"/></svg>
<svg style="left:256px;top:168px" width="8" height="6" viewBox="0 0 8 6"><path d="M0 0 H8 L4 6 Z" fill="#333"/></svg>
<div class="t" style="left:288.76px;top:165.27px;font-size:13px;color:#151515;font-weight:normal;letter-spacing:0.614px;">[2] Menü</div>
<svg style="left:283px;top:183px" width="16" height="16" viewBox="0 0 16 16"><path d="M1.5 0.5 H9.5 L13.5 4.5 V15.5 H1.5 Z" fill="#f8f8f8" stroke="#c4c4c4" stroke-width="1"/><path d="M9.5 0.5 V4.5 H13.5" fill="#f0f0f0" stroke="#c4c4c4" stroke-width="1"/><rect x="3.5" y="6.5" width="9" height="9" fill="#fff" stroke="#222" stroke-width="1"/><path d="M5.5 13.8 Q5.5 10.3 8.6 10.3 V8.6 L11.2 11 L8.6 13.4 V11.8 Q7 11.8 5.5 13.8 Z" fill="#111"/></svg>
<div class="t" style="left:304.44px;top:184.88px;font-size:13px;color:#151515;font-weight:normal;letter-spacing:0.521px;">[32] Startseite</div>
<svg style="left:283px;top:202px" width="16" height="16" viewBox="0 0 16 16"><path d="M1.5 0.5 H9.5 L13.5 4.5 V15.5 H1.5 Z" fill="#f2f2f2" stroke="#c4c4c4" stroke-width="1"/><path d="M9.5 0.5 V4.5 H13.5" fill="#f0f0f0" stroke="#c4c4c4" stroke-width="1"/></svg>
<div class="t" style="left:304.44px;top:204.49px;font-size:13px;color:#151515;font-weight:normal;letter-spacing:0.691px;">[220] Om ttp</div>
<svg style="left:283px;top:222px" width="16" height="16" viewBox="0 0 16 16"><path d="M1.5 0.5 H9.5 L13.5 4.5 V15.5 H1.5 Z" fill="#f8f8f8" stroke="#9a9a9a" stroke-width="1"/><path d="M9.5 0.5 V4.5 H13.5" fill="#f0f0f0" stroke="#9a9a9a" stroke-width="1"/></svg>
<svg style="left:272px;top:226px" width="6" height="8" viewBox="0 0 6 8"><path d="M0 0 V8 L5.5 4 Z" fill="#999"/></svg>
<div class="t" style="left:304.44px;top:224.10px;font-size:13px;color:#151515;font-weight:normal;letter-spacing:0.447px;">[89] Unternehmen</div>
<svg style="left:283px;top:242px" width="16" height="16" viewBox="0 0 16 16"><path d="M1.5 0.5 H9.5 L13.5 4.5 V15.5 H1.5 Z" fill="#f8f8f8" stroke="#9a9a9a" stroke-width="1"/><path d="M9.5 0.5 V4.5 H13.5" fill="#f0f0f0" stroke="#9a9a9a" stroke-width="1"/></svg>
<svg style="left:272px;top:246px" width="6" height="8" viewBox="0 0 6 8"><path d="M0 0 V8 L5.5 4 Z" fill="#999"/></svg>
<div class="t" style="left:304.44px;top:243.71px;font-size:13px;color:#151515;font-weight:normal;letter-spacing:0.379px;">[88] Leistungen</div>
<svg style="left:283px;top:261px" width="16" height="16" viewBox="0 0 16 16"><path d="M1.5 0.5 H9.5 L13.5 4.5 V15.5 H1.5 Z" fill="#f8f8f8" stroke="#9a9a9a" stroke-width="1"/><path d="M9.5 0.5 V4.5 H13.5" fill="#f0f0f0" stroke="#9a9a9a" stroke-width="1"/></svg>
<svg style="left:272px;top:265px" width="6" height="8" viewBox="0 0 6 8"><path d="M0 0 V8 L5.5 4 Z" fill="#999"/></svg>
<div class="t" style="left:304.44px;top:263.32px;font-size:13px;color:#151515;font-weight:normal;letter-spacing:0.243px;">[94] Spezialisierungen</div>
<svg style="left:283px;top:281px" width="16" height="16" viewBox="0 0 16 16"><path d="M1.5 0.5 H9.5 L13.5 4.5 V15.5 H1.5 Z" fill="#f8f8f8" stroke="#9a9a9a" stroke-width="1"/><path d="M9.5 0.5 V4.5 H13.5" fill="#f0f0f0" stroke="#9a9a9a" stroke-width="1"/><circle cx="10.5" cy="12" r="4.6" fill="#d2232a"/><rect x="7.7" y="11.2" width="5.6" height="1.7" fill="#fff"/></svg>
<div class="t" style="left:304.44px;top:282.93px;font-size:13px;color:#151515;font-weight:normal;letter-spacing:0.236px;">[194] Personaldienstleistungen_alt</div>
<svg style="left:283px;top:300px" width="16" height="16" viewBox="0 0 16 16"><path d="M1.5 0.5 H9.5 L13.5 4.5 V15.5 H1.5 Z" fill="#f8f8f8" stroke="#9a9a9a" stroke-width="1"/><path d="M9.5 0.5 V4.5 H13.5" fill="#f0f0f0" stroke="#9a9a9a" stroke-width="1"/></svg>
<svg style="left:272px;top:304px" width="6" height="8" viewBox="0 0 6 8"><path d="M0 0 V8 L5.5 4 Z" fill="#999"/></svg>
<div class="t" style="left:304.44px;top:302.54px;font-size:13px;color:#151515;font-weight:normal;letter-spacing:0.445px;">[103] ttp Online-Büro</div>
<svg style="left:283px;top:320px" width="16" height="16" viewBox="0 0 16 16"><path d="M1.5 0.5 H9.5 L13.5 4.5 V15.5 H1.5 Z" fill="#f8f8f8" stroke="#9a9a9a" stroke-width="1"/><path d="M9.5 0.5 V4.5 H13.5" fill="#f0f0f0" stroke="#9a9a9a" stroke-width="1"/></svg>
<svg style="left:271px;top:325px" width="8" height="6" viewBox="0 0 8 6"><path d="M0 0 H8 L4 6 Z" fill="#333"/></svg>
<div class="t" style="left:304.44px;top:322.15px;font-size:13px;color:#151515;font-weight:normal;letter-spacing:0.408px;">[105] Service</div>
<svg style="left:299px;top:340px" width="16" height="16" viewBox="0 0 16 16"><path d="M1.5 0.5 H9.5 L13.5 4.5 V15.5 H1.5 Z" fill="#f8f8f8" stroke="#9a9a9a" stroke-width="1"/><path d="M9.5 0.5 V4.5 H13.5" fill="#f0f0f0" stroke="#9a9a9a" stroke-width="1"/></svg>
<svg style="left:288px;top:344px" width="6" height="8" viewBox="0 0 6 8"><path d="M0 0 V8 L5.5 4 Z" fill="#999"/></svg>
<div class="t" style="left:320.12px;top:341.76px;font-size:13px;color:#151515;font-weight:normal;letter-spacing:0.41px;">[109] Veranstaltungen</div>
<svg style="left:299px;top:359px" width="16" height="16" viewBox="0 0 16 16"><path d="M1.5 0.5 H9.5 L13.5 4.5 V15.5 H1.5 Z" fill="#f8f8f8" stroke="#9a9a9a" stroke-width="1"/><path d="M9.5 0.5 V4.5 H13.5" fill="#f0f0f0" stroke="#9a9a9a" stroke-width="1"/></svg>
<div class="t" style="left:320.12px;top:361.37px;font-size:13px;color:#151515;font-weight:normal;letter-spacing:0.245px;">[107] Presse</div>
<svg style="left:299px;top:379px" width="16" height="16" viewBox="0 0 16 16"><path d="M1.5 0.5 H9.5 L13.5 4.5 V15.5 H1.5 Z" fill="#f8f8f8" stroke="#9a9a9a" stroke-width="1"/><path d="M9.5 0.5 V4.5 H13.5" fill="#f0f0f0" stroke="#9a9a9a" stroke-width="1"/></svg>
<div class="t" style="left:320.12px;top:380.98px;font-size:13px;color:#151515;font-weight:normal;letter-spacing:0.44px;">[186] Newsletter</div>
<svg style="left:299px;top:399px" width="16" height="16" viewBox="0 0 16 16"><path d="M1.5 0.5 H9.5 L13.5 4.5 V15.5 H1.5 Z" fill="#f8f8f8" stroke="#9a9a9a" stroke-width="1"/><path d="M9.5 0.5 V4.5 H13.5" fill="#f0f0f0" stroke="#9a9a9a" stroke-width="1"/></svg>
<svg style="left:287px;top:404px" width="8" height="6" viewBox="0 0 8 6"><path d="M0 0 H8 L4 6 Z" fill="#333"/></svg>
<div class="t" style="left:320.12px;top:400.59px;font-size:13px;color:#151515;font-weight:normal;letter-spacing:0.42px;">[110] Strategiepapier</div>
<svg style="left:315px;top:418px" width="16" height="16" viewBox="0 0 16 16"><path d="M1 2 H6.5 L7.5 3.5 H15 V14 H1 Z" fill="#6f6f6f"/><rect x="1" y="5" width="14" height="9" fill="#8e8e8e"/></svg>
<div class="t" style="left:335.79999999999995px;top:420.20px;font-size:13px;color:#151515;font-weight:normal;letter-spacing:0.408px;">[172] Formular</div>
<svg style="left:315px;top:438px" width="16" height="16" viewBox="0 0 16 16"><path d="M1 2 H6.5 L7.5 3.5 H15 V14 H1 Z" fill="#6f6f6f"/><rect x="1" y="5" width="14" height="9" fill="#8e8e8e"/></svg>
<div class="t" style="left:335.79999999999995px;top:439.81px;font-size:13px;color:#151515;font-weight:normal;letter-spacing:0.338px;">[173] Strategiepapiere</div>
<svg style="left:299px;top:457px" width="16" height="16" viewBox="0 0 16 16"><path d="M1.5 0.5 H9.5 L13.5 4.5 V15.5 H1.5 Z" fill="#f8f8f8" stroke="#9a9a9a" stroke-width="1"/><path d="M9.5 0.5 V4.5 H13.5" fill="#f0f0f0" stroke="#9a9a9a" stroke-width="1"/></svg>
<svg style="left:288px;top:461px" width="6" height="8" viewBox="0 0 6 8"><path d="M0 0 V8 L5.5 4 Z" fill="#999"/></svg>
<div class="t" style="left:320.12px;top:459.42px;font-size:13px;color:#151515;font-weight:normal;letter-spacing:0.348px;">[111] Wissensdatenbank</div>
<svg style="left:299px;top:477px" width="16" height="16" viewBox="0 0 16 16"><path d="M1.5 0.5 H9.5 L13.5 4.5 V15.5 H1.5 Z" fill="#f8f8f8" stroke="#9a9a9a" stroke-width="1"/><path d="M9.5 0.5 V4.5 H13.5" fill="#f0f0f0" stroke="#9a9a9a" stroke-width="1"/></svg>
<div class="t" style="left:320.12px;top:479.03px;font-size:13px;color:#151515;font-weight:normal;letter-spacing:0.458px;">[112] Strategen-Blog</div>
<svg style="left:299px;top:497px" width="16" height="16" viewBox="0 0 16 16"><path d="M1.5 0.5 H9.5 L13.5 4.5 V15.5 H1.5 Z" fill="#f8f8f8" stroke="#9a9a9a" stroke-width="1"/><path d="M9.5 0.5 V4.5 H13.5" fill="#f0f0f0" stroke="#9a9a9a" stroke-width="1"/></svg>
<svg style="left:288px;top:501px" width="6" height="8" viewBox="0 0 6 8"><path d="M0 0 V8 L5.5 4 Z" fill="#999"/></svg>
<div class="t" style="left:320.12px;top:498.64px;font-size:13px;color:#151515;font-weight:normal;letter-spacing:0.414px;">[113] Downloads</div>
<svg style="left:299px;top:516px" width="16" height="16" viewBox="0 0 16 16"><path d="M1.5 0.5 H9.5 L13.5 4.5 V15.5 H1.5 Z" fill="#f8f8f8" stroke="#9a9a9a" stroke-width="1"/><path d="M9.5 0.5 V4.5 H13.5" fill="#f0f0f0" stroke="#9a9a9a" stroke-width="1"/></svg>
<div class="t" style="left:320.12px;top:518.25px;font-size:13px;color:#151515;font-weight:normal;letter-spacing:0.57px;">[114] Links</div>
<svg style="left:283px;top:536px" width="16" height="16" viewBox="0 0 16 16"><path d="M1.5 0.5 H9.5 L13.5 4.5 V15.5 H1.5 Z" fill="#f8f8f8" stroke="#9a9a9a" stroke-width="1"/><path d="M9.5 0.5 V4.5 H13.5" fill="#f0f0f0" stroke="#9a9a9a" stroke-width="1"/></svg>
<svg style="left:272px;top:540px" width="6" height="8" viewBox="0 0 6 8"><path d="M0 0 V8 L5.5 4 Z" fill="#999"/></svg>
<div class="t" style="left:304.44px;top:537.86px;font-size:13px;color:#151515;font-weight:normal;letter-spacing:0.531px;">[115] Karriere</div>
<svg style="left:268px;top:555px" width="16" height="16" viewBox="0 0 16 16"><path d="M1.5 0.5 H9.5 L13.5 4.5 V15.5 H1.5 Z" fill="#f8f8f8" stroke="#c4c4c4" stroke-width="1"/><path d="M9.5 0.5 V4.5 H13.5" fill="#f0f0f0" stroke="#c4c4c4" stroke-width="1"/><rect x="3.5" y="6.5" width="9" height="9" fill="#fff" stroke="#222" stroke-width="1"/><path d="M5.5 13.8 Q5.5 10.3 8.6 10.3 V8.6 L11.2 11 L8.6 13.4 V11.8 Q7 11.8 5.5 13.8 Z" fill="#111"/></svg>
<svg style="left:257px;top:559px" width="6" height="8" viewBox="0 0 6 8"><path d="M0 0 V8 L5.5 4 Z" fill="#999"/></svg>
<div class="t" style="left:288.76px;top:557.47px;font-size:13px;color:#151515;font-weight:normal;letter-spacing:0.394px;">[3] Metanavigation</div>
<svg style="left:268px;top:575px" width="16" height="16" viewBox="0 0 16 16"><path d="M1.5 0.5 H9.5 L13.5 4.5 V15.5 H1.5 Z" fill="#f8f8f8" stroke="#c4c4c4" stroke-width="1"/><path d="M9.5 0.5 V4.5 H13.5" fill="#f0f0f0" stroke="#c4c4c4" stroke-width="1"/><rect x="3.5" y="6.5" width="9" height="9" fill="#fff" stroke="#222" stroke-width="1"/><path d="M5.5 13.8 Q5.5 10.3 8.6 10.3 V8.6 L11.2 11 L8.6 13.4 V11.8 Q7 11.8 5.5 13.8 Z" fill="#111"/></svg>
<svg style="left:257px;top:579px" width="6" height="8" viewBox="0 0 6 8"><path d="M0 0 V8 L5.5 4 Z" fill="#999"/></svg>
<div class="t" style="left:288.76px;top:577.08px;font-size:13px;color:#151515;font-weight:normal;letter-spacing:0.285px;">[22] Menü Oben</div>
<svg style="left:268px;top:595px" width="16" height="16" viewBox="0 0 16 16"><path d="M1.5 0.5 H9.5 L13.5 4.5 V15.5 H1.5 Z" fill="#f8f8f8" stroke="#c4c4c4" stroke-width="1"/><path d="M9.5 0.5 V4.5 H13.5" fill="#f0f0f0" stroke="#c4c4c4" stroke-width="1"/><rect x="3.5" y="6.5" width="9" height="9" fill="#fff" stroke="#222" stroke-width="1"/><path d="M5.5 13.8 Q5.5 10.3 8.6 10.3 V8.6 L11.2 11 L8.6 13.4 V11.8 Q7 11.8 5.5 13.8 Z" fill="#111"/></svg>
<svg style="left:257px;top:599px" width="6" height="8" viewBox="0 0 6 8"><path d="M0 0 V8 L5.5 4 Z" fill="#999"/></svg>
<div class="t" style="left:288.76px;top:596.69px;font-size:13px;color:#151515;font-weight:normal;letter-spacing:0.427px;">[13] Service</div>
<svg style="left:268px;top:614px" width="16" height="16" viewBox="0 0 16 16"><path d="M1 2 H6.5 L7.5 3.5 H15 V14 H1 Z" fill="#6f6f6f"/><rect x="1" y="5" width="14" height="9" fill="#8e8e8e"/></svg>
<svg style="left:256px;top:619px" width="8" height="6" viewBox="0 0 8 6"><path d="M0 0 H8 L4 6 Z" fill="#333"/></svg>
<div class="t" style="left:288.76px;top:616.30px;font-size:13px;color:#151515;font-weight:normal;letter-spacing:0.276px;">[189] Landingpages</div>
<svg style="left:283px;top:634px" width="16" height="16" viewBox="0 0 16 16"><path d="M1.5 0.5 H9.5 L13.5 4.5 V15.5 H1.5 Z" fill="#f2f2f2" stroke="#c4c4c4" stroke-width="1"/><path d="M9.5 0.5 V4.5 H13.5" fill="#f0f0f0" stroke="#c4c4c4" stroke-width="1"/></svg>
<div class="t" style="left:304.44px;top:635.91px;font-size:13px;color:#151515;font-weight:normal;letter-spacing:0.443px;">[163] Immobilieninvestitionen</div>
<svg style="left:283px;top:653px" width="16" height="16" viewBox="0 0 16 16"><path d="M1.5 0.5 H9.5 L13.5 4.5 V15.5 H1.5 Z" fill="#f2f2f2" stroke="#c4c4c4" stroke-width="1"/><path d="M9.5 0.5 V4.5 H13.5" fill="#f0f0f0" stroke="#c4c4c4" stroke-width="1"/></svg>
<div class="t" style="left:304.44px;top:655.52px;font-size:13px;color:#151515;font-weight:normal;letter-spacing:0.356px;">[164] Internationales Steuerrecht</div>
<svg style="left:268px;top:673px" width="16" height="16" viewBox="0 0 16 16"><path d="M1 2 H6.5 L7.5 3.5 H15 V14 H1 Z" fill="#6f6f6f"/><rect x="1" y="5" width="14" height="9" fill="#8e8e8e"/></svg>
<div class="t" style="left:288.76px;top:675.13px;font-size:13px;color:#151515;font-weight:normal;letter-spacing:0.479px;">[170] Standorte</div>
<svg style="left:268px;top:693px" width="16" height="16" viewBox="0 0 16 16"><path d="M1 2 H6.5 L7.5 3.5 H15 V14 H1 Z" fill="#6f6f6f"/><rect x="1" y="5" width="14" height="9" fill="#8e8e8e"/></svg>
<div class="t" style="left:288.76px;top:694.74px;font-size:13px;color:#151515;font-weight:normal;letter-spacing:0.379px;">[48] HeroSlider</div>
<svg style="left:268px;top:712px" width="16" height="16" viewBox="0 0 16 16"><path d="M1 2 H6.5 L7.5 3.5 H15 V14 H1 Z" fill="#6f6f6f"/><rect x="1" y="5" width="14" height="9" fill="#8e8e8e"/></svg>
<div class="t" style="left:288.76px;top:714.35px;font-size:13px;color:#151515;font-weight:normal;letter-spacing:0.453px;">[15] Kontaktanfragen</div>
<svg style="left:268px;top:732px" width="16" height="16" viewBox="0 0 16 16"><path d="M1 2 H6.5 L7.5 3.5 H15 V14 H1 Z" fill="#6f6f6f"/><rect x="1" y="5" width="14" height="9" fill="#8e8e8e"/></svg>
<svg style="left:257px;top:736px" width="6" height="8" viewBox="0 0 6 8"><path d="M0 0 V8 L5.5 4 Z" fill="#999"/></svg>
<div class="t" style="left:288.76px;top:733.96px;font-size:13px;color:#151515;font-weight:normal;letter-spacing:0.511px;">[125] News</div>
<svg style="left:268px;top:752px" width="16" height="16" viewBox="0 0 16 16"><path d="M1 2 H6.5 L7.5 3.5 H15 V14 H1 Z" fill="#6f6f6f"/><rect x="1" y="5" width="14" height="9" fill="#8e8e8e"/></svg>
<svg style="left:257px;top:756px" width="6" height="8" viewBox="0 0 6 8"><path d="M0 0 V8 L5.5 4 Z" fill="#999"/></svg>
<div class="t" style="left:288.76px;top:753.57px;font-size:13px;color:#151515;font-weight:normal;letter-spacing:0.508px;">[126] Kontakte</div>
<svg style="left:268px;top:771px" width="16" height="16" viewBox="0 0 16 16"><path d="M1 2 H6.5 L7.5 3.5 H15 V14 H1 Z" fill="#6f6f6f"/><rect x="1" y="5" width="14" height="9" fill="#8e8e8e"/></svg>
<div class="t" style="left:288.76px;top:773.18px;font-size:13px;color:#151515;font-weight:normal;letter-spacing:0.418px;">[185] Newsletter registration</div>
<svg style="left:252px;top:791px" width="16" height="16" viewBox="0 0 16 16"><circle cx="8" cy="8" r="7.6" fill="#4a9ce8"/><path d="M6 1.2 Q9 0.6 11 2 Q12 3.5 10.5 4.2 Q8.8 4 8.2 5 Q9.2 6 11 6 Q13.8 6.3 13.6 9 Q13 10.5 11.5 11 Q10.5 12.5 9.3 14.6 Q8.2 14 8.4 12 Q8 10 6.8 9.3 Q5.2 8.8 5.4 7 Q5.2 5.2 6.6 4.4 Q5.6 3 6 1.2 Z" fill="#a6d22b"/><path d="M1.2 6 Q2.2 6.6 2.4 8.6 Q2 10 1.4 10.2 Q0.6 8 1.2 6 Z" fill="#a6d22b"/></svg>
<svg style="left:241px;top:795px" width="6" height="8" viewBox="0 0 6 8"><path d="M0 0 V8 L5.5 4 Z" fill="#999"/></svg>
<div class="t" style="left:273.08px;top:792.79px;font-size:13px;color:#151515;font-weight:normal;letter-spacing:0.188px;">[50] Startseite TTP Rechtsanwälte</div>
<svg style="left:253px;top:810px" width="14" height="16" viewBox="0 0 14 16"><rect x="1" y="2" width="12" height="2" fill="#c0c0c0"/><rect x="5" y="0.5" width="4" height="2" fill="#c0c0c0"/><path d="M2 5 H12 L11 15 H3 Z" fill="#c9c9c9"/></svg>
<svg style="left:240px;top:815px" width="8" height="6" viewBox="0 0 8 6"><path d="M0 0 H8 L4 6 Z" fill="#333"/></svg>
<div class="t" style="left:273.08px;top:812.40px;font-size:13px;color:#151515;font-weight:normal;letter-spacing:0.413px;">[213] Papierkorb</div>
<svg style="left:268px;top:830px" width="16" height="16" viewBox="0 0 16 16"><path d="M1 2 H6.5 L7.5 3.5 H15 V14 H1 Z" fill="#6f6f6f"/><rect x="1" y="5" width="14" height="9" fill="#8e8e8e"/><circle cx="10.5" cy="12" r="4.6" fill="#d2232a"/><rect x="7.7" y="11.2" width="5.6" height="1.7" fill="#fff"/></svg>
<div class="t" style="left:288.76px;top:832.01px;font-size:13px;color:#151515;font-weight:normal;letter-spacing:0.545px;">[227] Notare</div>
<div class="a" style="left:309px;top:433px;width:172px;height:28px;border:3px solid #e8131b"></div>
<div class="t" style="left:538px;top:123.75px;font-size:25px;color:#111;font-weight:normal;letter-spacing:1.8px;transform:scaleX(0.82);transform-origin:0 0;-webkit-text-stroke:0.8px #111">Strategiepapiere</div>
<div class="a" style="left:538px;top:186px;width:1039px;height:720px;border:1px solid #c9c9c9;border-radius:2px;background:#f7f7f7"></div>
<div class="a" style="left:539px;top:187px;width:1037px;height:38px;background:#dcdcdc;"></div>
<div class="a" style="left:539px;top:225px;width:1037px;height:1px;background:#c9c9c9;"></div>
<div class="t" style="left:553px;top:199.75px;font-size:13px;color:#595959;font-weight:bold;letter-spacing:0.82px;-webkit-text-stroke:0;">Strategypaper (20)</div>
<svg style="left:691px;top:202px" width="5" height="8" viewBox="0 0 5 8"><path d="M0.8 0.8 L4 4 L0.8 7.2" fill="none" stroke="#222" stroke-width="1.7"/></svg>
<svg style="left:1550px;top:203px" width="8" height="5" viewBox="0 0 8 5"><path d="M0.8 4.5 L4 1.2 L7.2 4.5" fill="none" stroke="#222" stroke-width="1.7"/></svg>
<div class="a" style="left:539px;top:226px;width:1037px;height:44px;background:#ededed;"></div>
<div class="a" style="left:539px;top:270px;width:1037px;height:1px;background:#d8d8d8;"></div>
<div class="a" style="left:546px;top:232px;width:29px;height:32px;background:#e0e0e0;border:1px solid #c4c4c4;border-radius:2px;"></div>
<svg style="left:555.5px;top:244px" width="10" height="10" viewBox="0 0 10 10"><path d="M5 0 V10 M0 5 H10" stroke="#111" stroke-width="2"/></svg>
<div class="t" style="left:581px;top:242.05px;font-size:13px;color:#222;font-weight:bold;letter-spacing:0.62px;-webkit-text-stroke:0;">Title</div>
<div class="t" style="left:1337px;top:242.05px;font-size:13px;color:#222;font-weight:normal;letter-spacing:0.32px;font-style:italic">[Lokalisierung]</div>
<div class="t" style="left:1485px;top:242.05px;font-size:13px;color:#111;font-weight:bold;letter-spacing:0.5px;-webkit-text-stroke:0;">Lokalisieren:</div>
<svg style="left:552.3px;top:286px" width="17" height="14" viewBox="0 0 17 14"><rect x="6" y="0" width="4.6" height="4.2" fill="#6fa6ea"/><rect x="7.3" y="1.2" width="2" height="1.8" fill="#c9def8"/><path d="M2.6 7.6 V6.3 H13.9 V7.6 M8.3 5.2 V6.3" fill="none" stroke="#666" stroke-width="0.7"/><rect x="0" y="9" width="4.6" height="4.2" fill="#5cb85c"/><rect x="6" y="9" width="4.6" height="4.2" fill="#47a447"/><rect x="11.9" y="9" width="4.6" height="4.2" fill="#2d8a2d"/><rect x="1.5" y="10.3" width="1.6" height="1.6" fill="#bfe6bf"/><rect x="7.5" y="10.3" width="1.6" height="1.6" fill="#9fd69f"/><rect x="13.4" y="10.3" width="1.6" height="1.6" fill="#6fbf6f"/></svg>
<div class="t" style="left:581px;top:285.55px;font-size:13px;color:#222;font-weight:normal;letter-spacing:0.52px;">2/2019</div>
<div class="a" style="left:965px;top:276px;width:86px;height:32px;border:1px solid #cfcfcf;border-radius:2px;overflow:hidden;background:#e0e0e0">
<div class="a" style="left:-1px;top:0;width:29px;height:30px;background:#e0e0e0;border-left:0px solid #cfcfcf"></div>
<div class="a" style="left:28px;top:0;width:28px;height:30px;background:#e0e0e0;border-left:1px solid #cfcfcf"></div>
<div class="a" style="left:56px;top:0;width:29px;height:30px;background:#e0e0e0;border-left:1px solid #cfcfcf"></div>
</div>
<div class="a" style="left:1055px;top:276px;width:143px;height:32px;border:1px solid #cfcfcf;border-radius:2px;overflow:hidden;background:#e0e0e0">
<div class="a" style="left:-1px;top:0;width:29px;height:30px;background:#e0e0e0;border-left:0px solid #cfcfcf"></div>
<div class="a" style="left:28px;top:0;width:28px;height:30px;background:#e0e0e0;border-left:1px solid #cfcfcf"></div>
<div class="a" style="left:56px;top:0;width:29px;height:30px;background:#e0e0e0;border-left:1px solid #cfcfcf"></div>
<div class="a" style="left:85px;top:0;width:28px;height:30px;background:#e8e8e8;border-left:1px solid #cfcfcf"></div>
<div class="a" style="left:113px;top:0;width:29px;height:30px;background:#e0e0e0;border-left:1px solid #cfcfcf"></div>
</div>
<div class="a" style="left:1210px;top:276px;width:114px;height:32px;border:1px solid #cfcfcf;border-radius:2px;overflow:hidden;background:#e0e0e0">
<div class="a" style="left:-1px;top:0;width:29px;height:30px;background:#e8e8e8;border-left:0px solid #cfcfcf"></div>
<div class="a" style="left:28px;top:0;width:28px;height:30px;background:#e8e8e8;border-left:1px solid #cfcfcf"></div>
<div class="a" style="left:56px;top:0;width:29px;height:30px;background:#e0e0e0;border-left:1px solid #cfcfcf"></div>
<div class="a" style="left:85px;top:0;width:28px;height:30px;background:#e0e0e0;border-left:1px solid #cfcfcf"></div>
</div>
<svg style="left:972px;top:285px" width="16" height="16" viewBox="0 0 16 16"><path d="M1 15 L2 11 L11.5 1.5 L14.5 4.5 L5 14 Z" fill="#111"/><path d="M2.3 12 L4 13.7" stroke="#e0e0e0" stroke-width="0.8"/><path d="M10.5 2.5 L13.5 5.5" stroke="#e0e0e0" stroke-width="0.8"/></svg>
<svg style="left:1000px;top:286px" width="16" height="14" viewBox="0 0 16 14"><rect x="0" y="2" width="16" height="10" rx="5" fill="#111"/><circle cx="11" cy="7" r="3.3" fill="#fff"/></svg>
<svg style="left:1030px;top:285px" width="13" height="15" viewBox="0 0 13 15"><path d="M0.5 2.6 H12 " stroke="#111" stroke-width="1.3"/><path d="M4.3 2.3 V0.8 H8.2 V2.3" fill="none" stroke="#111" stroke-width="1.1"/><path d="M1.6 3.2 V13.6 Q1.6 14.3 2.3 14.3 H10.2 Q10.9 14.3 10.9 13.6 V3.2" fill="none" stroke="#111" stroke-width="1.3"/><path d="M4.8 4.8 V12.5 M7.7 4.8 V12.5" stroke="#111" stroke-width="1.1"/></svg>
<svg style="left:1067px;top:286px" width="7" height="13" viewBox="0 0 7 13"><rect x="2" y="1" width="3" height="2.2" fill="#111"/><path d="M0.5 4.3 H5 V11 H6.5 V13 H0.5 V11 H2 V6.3 H0.5 Z" fill="#111"/></svg>
<svg style="left:1091px;top:285px" width="16" height="16" viewBox="0 0 16 16"><path d="M3.2 4.2 A6 6 0 1 1 2.6 10.5" fill="none" stroke="#111" stroke-width="1.6"/><path d="M0.5 1.8 L1.2 6.8 L5.6 5.4 Z" fill="#111"/><path d="M8 4.5 V8.5 H5.5" fill="none" stroke="#111" stroke-width="1.5"/></svg>
<svg style="left:1122px;top:288px" width="10" height="10" viewBox="0 0 10 10"><path d="M5 0 V10 M0 5 H10" stroke="#111" stroke-width="2.1"/></svg>
<svg style="left:1179px;top:290px" width="10" height="8" viewBox="0 0 10 8"><path d="M0 0 L4.75 7 L9.5 0 Z" fill="#111"/></svg>
<svg style="left:1276px;top:286px" width="11" height="15" viewBox="0 0 11 15"><rect x="0.8" y="1.6" width="9" height="12.6" rx="0.6" fill="none" stroke="#111" stroke-width="1.3"/><path d="M3 1.6 H7.6 L6.5 3 H4.1 Z" fill="#111"/><circle cx="5.3" cy="1" r="0.8" fill="#111"/></svg>
<svg style="left:1304px;top:285px" width="14" height="16" viewBox="0 0 14 16"><ellipse cx="2.6" cy="2.6" rx="1.8" ry="2" fill="none" stroke="#111" stroke-width="1.3"/><ellipse cx="2.6" cy="13.4" rx="1.8" ry="2" fill="none" stroke="#111" stroke-width="1.3"/><path d="M3.5 4.3 L5 8 L3.5 11.7" fill="none" stroke="#111" stroke-width="1.6"/><path d="M5 8 L12.5 3.5" stroke="#111" stroke-width="2.3" stroke-linecap="round"/><path d="M5 8 L12.5 12.2" stroke="#111" stroke-width="2.3" stroke-linecap="round"/><circle cx="5.2" cy="8" r="0.6" fill="#ddd"/></svg>
<svg style="left:1336.5px;top:285px" width="15.6" height="16" viewBox="0 0 15.6 16"><rect x="0" y="0" width="15.6" height="5.3" fill="#000"/><rect x="0" y="5.3" width="15.6" height="5.4" fill="#e20c17"/><rect x="0" y="10.7" width="15.6" height="5.3" fill="#fdcb2c"/></svg>
<div class="t" style="left:1357px;top:285.55px;font-size:13px;color:#222;font-weight:normal;letter-spacing:0.2px;">Deutsch (Standard)</div>
<div class="a" style="left:539px;top:314px;width:1037px;height:1.3px;background:#d6d6d6;"></div>
<svg style="left:552.3px;top:330px" width="17" height="14" viewBox="0 0 17 14"><rect x="6" y="0" width="4.6" height="4.2" fill="#6fa6ea"/><rect x="7.3" y="1.2" width="2" height="1.8" fill="#c9def8"/><path d="M2.6 7.6 V6.3 H13.9 V7.6 M8.3 5.2 V6.3" fill="none" stroke="#666" stroke-width="0.7"/><rect x="0" y="9" width="4.6" height="4.2" fill="#5cb85c"/><rect x="6" y="9" width="4.6" height="4.2" fill="#47a447"/><rect x="11.9" y="9" width="4.6" height="4.2" fill="#2d8a2d"/><rect x="1.5" y="10.3" width="1.6" height="1.6" fill="#bfe6bf"/><rect x="7.5" y="10.3" width="1.6" height="1.6" fill="#9fd69f"/><rect x="13.4" y="10.3" width="1.6" height="1.6" fill="#6fbf6f"/></svg>
<div class="t" style="left:581px;top:329.55px;font-size:13px;color:#222;font-weight:normal;letter-spacing:0.52px;">1/2019</div>
<div class="a" style="left:965px;top:320px;width:86px;height:32px;border:1px solid #cfcfcf;border-radius:2px;overflow:hidden;background:#e0e0e0">
<div class="a" style="left:-1px;top:0;width:29px;height:30px;background:#e0e0e0;border-left:0px solid #cfcfcf"></div>
<div class="a" style="left:28px;top:0;width:28px;height:30px;background:#e0e0e0;border-left:1px solid #cfcfcf"></div>
<div class="a" style="left:56px;top:0;width:29px;height:30px;background:#e0e0e0;border-left:1px solid #cfcfcf"></div>
</div>
<div class="a" style="left:1055px;top:320px;width:143px;height:32px;border:1px solid #cfcfcf;border-radius:2px;overflow:hidden;background:#e0e0e0">
<div class="a" style="left:-1px;top:0;width:29px;height:30px;background:#e0e0e0;border-left:0px solid #cfcfcf"></div>
<div class="a" style="left:28px;top:0;width:28px;height:30px;background:#e0e0e0;border-left:1px solid #cfcfcf"></div>
<div class="a" style="left:56px;top:0;width:29px;height:30px;background:#e0e0e0;border-left:1px solid #cfcfcf"></div>
<div class="a" style="left:85px;top:0;width:28px;height:30px;background:#e0e0e0;border-left:1px solid #cfcfcf"></div>
<div class="a" style="left:113px;top:0;width:29px;height:30px;background:#e0e0e0;border-left:1px solid #cfcfcf"></div>
</div>
<div class="a" style="left:1210px;top:320px;width:114px;height:32px;border:1px solid #cfcfcf;border-radius:2px;overflow:hidden;background:#e0e0e0">
<div class="a" style="left:-1px;top:0;width:29px;height:30px;background:#e8e8e8;border-left:0px solid #cfcfcf"></div>
<div class="a" style="left:28px;top:0;width:28px;height:30px;background:#e8e8e8;border-left:1px solid #cfcfcf"></div>
<div class="a" style="left:56px;top:0;width:29px;height:30px;background:#e0e0e0;border-left:1px solid #cfcfcf"></div>
<div class="a" style="left:85px;top:0;width:28px;height:30px;background:#e0e0e0;border-left:1px solid #cfcfcf"></div>
</div>
<svg style="left:972px;top:329px" width="16" height="16" viewBox="0 0 16 16"><path d="M1 15 L2 11 L11.5 1.5 L14.5 4.5 L5 14 Z" fill="#111"/><path d="M2.3 12 L4 13.7" stroke="#e0e0e0" stroke-width="0.8"/><path d="M10.5 2.5 L13.5 5.5" stroke="#e0e0e0" stroke-width="0.8"/></svg>
<svg style="left:1000px;top:330px" width="16" height="14" viewBox="0 0 16 14"><rect x="0" y="2" width="16" height="10" rx="5" fill="#111"/><circle cx="11" cy="7" r="3.3" fill="#fff"/></svg>
<svg style="left:1030px;top:329px" width="13" height="15" viewBox="0 0 13 15"><path d="M0.5 2.6 H12 " stroke="#111" stroke-width="1.3"/><path d="M4.3 2.3 V0.8 H8.2 V2.3" fill="none" stroke="#111" stroke-width="1.1"/><path d="M1.6 3.2 V13.6 Q1.6 14.3 2.3 14.3 H10.2 Q10.9 14.3 10.9 13.6 V3.2" fill="none" stroke="#111" stroke-width="1.3"/><path d="M4.8 4.8 V12.5 M7.7 4.8 V12.5" stroke="#111" stroke-width="1.1"/></svg>
<svg style="left:1067px;top:330px" width="7" height="13" viewBox="0 0 7 13"><rect x="2" y="1" width="3" height="2.2" fill="#111"/><path d="M0.5 4.3 H5 V11 H6.5 V13 H0.5 V11 H2 V6.3 H0.5 Z" fill="#111"/></svg>
<svg style="left:1091px;top:329px" width="16" height="16" viewBox="0 0 16 16"><path d="M3.2 4.2 A6 6 0 1 1 2.6 10.5" fill="none" stroke="#111" stroke-width="1.6"/><path d="M0.5 1.8 L1.2 6.8 L5.6 5.4 Z" fill="#111"/><path d="M8 4.5 V8.5 H5.5" fill="none" stroke="#111" stroke-width="1.5"/></svg>
<svg style="left:1122px;top:332px" width="10" height="10" viewBox="0 0 10 10"><path d="M5 0 V10 M0 5 H10" stroke="#111" stroke-width="2.1"/></svg>
<svg style="left:1150.5px;top:333.6px" width="9.5" height="7" viewBox="0 0 9.5 7"><path d="M0 6.5 L4.75 0 L9.5 6.5 Z" fill="#111"/></svg>
<svg style="left:1179px;top:334px" width="10" height="8" viewBox="0 0 10 8"><path d="M0 0 L4.75 7 L9.5 0 Z" fill="#111"/></svg>
<svg style="left:1276px;top:330px" width="11" height="15" viewBox="0 0 11 15"><rect x="0.8" y="1.6" width="9" height="12.6" rx="0.6" fill="none" stroke="#111" stroke-width="1.3"/><path d="M3 1.6 H7.6 L6.5 3 H4.1 Z" fill="#111"/><circle cx="5.3" cy="1" r="0.8" fill="#111"/></svg>
<svg style="left:1304px;top:329px" width="14" height="16" viewBox="0 0 14 16"><ellipse cx="2.6" cy="2.6" rx="1.8" ry="2" fill="none" stroke="#111" stroke-width="1.3"/><ellipse cx="2.6" cy="13.4" rx="1.8" ry="2" fill="none" stroke="#111" stroke-width="1.3"/><path d="M3.5 4.3 L5 8 L3.5 11.7" fill="none" stroke="#111" stroke-width="1.6"/><path d="M5 8 L12.5 3.5" stroke="#111" stroke-width="2.3" stroke-linecap="round"/><path d="M5 8 L12.5 12.2" stroke="#111" stroke-width="2.3" stroke-linecap="round"/><circle cx="5.2" cy="8" r="0.6" fill="#ddd"/></svg>
<svg style="left:1336.5px;top:329px" width="15.6" height="16" viewBox="0 0 15.6 16"><rect x="0" y="0" width="15.6" height="5.3" fill="#000"/><rect x="0" y="5.3" width="15.6" height="5.4" fill="#e20c17"/><rect x="0" y="10.7" width="15.6" height="5.3" fill="#fdcb2c"/></svg>
<div class="t" style="left:1357px;top:329.55px;font-size:13px;color:#222;font-weight:normal;letter-spacing:0.2px;">Deutsch (Standard)</div>
<div class="a" style="left:539px;top:358px;width:1037px;height:1.3px;background:#d6d6d6;"></div>
<svg style="left:552.3px;top:374px" width="17" height="14" viewBox="0 0 17 14"><rect x="6" y="0" width="4.6" height="4.2" fill="#6fa6ea"/><rect x="7.3" y="1.2" width="2" height="1.8" fill="#c9def8"/><path d="M2.6 7.6 V6.3 H13.9 V7.6 M8.3 5.2 V6.3" fill="none" stroke="#666" stroke-width="0.7"/><rect x="0" y="9" width="4.6" height="4.2" fill="#5cb85c"/><rect x="6" y="9" width="4.6" height="4.2" fill="#47a447"/><rect x="11.9" y="9" width="4.6" height="4.2" fill="#2d8a2d"/><rect x="1.5" y="10.3" width="1.6" height="1.6" fill="#bfe6bf"/><rect x="7.5" y="10.3" width="1.6" height="1.6" fill="#9fd69f"/><rect x="13.4" y="10.3" width="1.6" height="1.6" fill="#6fbf6f"/></svg>
<div class="t" style="left:581px;top:373.55px;font-size:13px;color:#222;font-weight:normal;letter-spacing:0.52px;">2/2018</div>
<div class="a" style="left:965px;top:364px;width:86px;height:32px;border:1px solid #cfcfcf;border-radius:2px;overflow:hidden;background:#e0e0e0">
<div class="a" style="left:-1px;top:0;width:29px;height:30px;background:#e0e0e0;border-left:0px solid #cfcfcf"></div>
<div class="a" style="left:28px;top:0;width:28px;height:30px;background:#e0e0e0;border-left:1px solid #cfcfcf"></div>
<div class="a" style="left:56px;top:0;width:29px;height:30px;background:#e0e0e0;border-left:1px solid #cfcfcf"></div>
</div>
<div class="a" style="left:1055px;top:364px;width:143px;height:32px;border:1px solid #cfcfcf;border-radius:2px;overflow:hidden;background:#e0e0e0">
<div class="a" style="left:-1px;top:0;width:29px;height:30px;background:#e0e0e0;border-left:0px solid #cfcfcf"></div>
<div class="a" style="left:28px;top:0;width:28px;height:30px;background:#e0e0e0;border-left:1px solid #cfcfcf"></div>
<div class="a" style="left:56px;top:0;width:29px;height:30px;background:#e0e0e0;border-left:1px solid #cfcfcf"></div>
<div class="a" style="left:85px;top:0;width:28px;height:30px;background:#e0e0e0;border-left:1px solid #cfcfcf"></div>
<div class="a" style="left:113px;top:0;width:29px;height:30px;background:#e0e0e0;border-left:1px solid #cfcfcf"></div>
</div>
<div class="a" style="left:1210px;top:364px;width:114px;height:32px;border:1px solid #cfcfcf;border-radius:2px;overflow:hidden;background:#e0e0e0">
<div class="a" style="left:-1px;top:0;width:29px;height:30px;background:#e8e8e8;border-left:0px solid #cfcfcf"></div>
<div class="a" style="left:28px;top:0;width:28px;height:30px;background:#e8e8e8;border-left:1px solid #cfcfcf"></div>
<div class="a" style="left:56px;top:0;width:29px;height:30px;background:#e0e0e0;border-left:1px solid #cfcfcf"></div>
<div class="a" style="left:85px;top:0;width:28px;height:30px;background:#e0e0e0;border-left:1px solid #cfcfcf"></div>
</div>
<svg style="left:972px;top:373px" width="16" height="16" viewBox="0 0 16 16"><path d="M1 15 L2 11 L11.5 1.5 L14.5 4.5 L5 14 Z" fill="#111"/><path d="M2.3 12 L4 13.7" stroke="#e0e0e0" stroke-width="0.8"/><path d="M10.5 2.5 L13.5 5.5" stroke="#e0e0e0" stroke-width="0.8"/></svg>
<svg style="left:1000px;top:374px" width="16" height="14" viewBox="0 0 16 14"><rect x="0" y="2" width="16" height="10" rx="5" fill="#111"/><circle cx="11" cy="7" r="3.3" fill="#fff"/></svg>
<svg style="left:1030px;top:373px" width="13" height="15" viewBox="0 0 13 15"><path d="M0.5 2.6 H12 " stroke="#111" stroke-width="1.3"/><path d="M4.3 2.3 V0.8 H8.2 V2.3" fill="none" stroke="#111" stroke-width="1.1"/><path d="M1.6 3.2 V13.6 Q1.6 14.3 2.3 14.3 H10.2 Q10.9 14.3 10.9 13.6 V3.2" fill="none" stroke="#111" stroke-width="1.3"/><path d="M4.8 4.8 V12.5 M7.7 4.8 V12.5" stroke="#111" stroke-width="1.1"/></svg>
<svg style="left:1067px;top:374px" width="7" height="13" viewBox="0 0 7 13"><rect x="2" y="1" width="3" height="2.2" fill="#111"/><path d="M0.5 4.3 H5 V11 H6.5 V13 H0.5 V11 H2 V6.3 H0.5 Z" fill="#111"/></svg>
<svg style="left:1091px;top:373px" width="16" height="16" viewBox="0 0 16 16"><path d="M3.2 4.2 A6 6 0 1 1 2.6 10.5" fill="none" stroke="#111" stroke-width="1.6"/><path d="M0.5 1.8 L1.2 6.8 L5.6 5.4 Z" fill="#111"/><path d="M8 4.5 V8.5 H5.5" fill="none" stroke="#111" stroke-width="1.5"/></svg>
<svg style="left:1122px;top:376px" width="10" height="10" viewBox="0 0 10 10"><path d="M5 0 V10 M0 5 H10" stroke="#111" stroke-width="2.1"/></svg>
<svg style="left:1150.5px;top:377.6px" width="9.5" height="7" viewBox="0 0 9.5 7"><path d="M0 6.5 L4.75 0 L9.5 6.5 Z" fill="#111"/></svg>
<svg style="left:1179px;top:378px" width="10" height="8" viewBox="0 0 10 8"><path d="M0 0 L4.75 7 L9.5 0 Z" fill="#111"/></svg>
<svg style="left:1276px;top:374px" width="11" height="15" viewBox="0 0 11 15"><rect x="0.8" y="1.6" width="9" height="12.6" rx="0.6" fill="none" stroke="#111" stroke-width="1.3"/><path d="M3 1.6 H7.6 L6.5 3 H4.1 Z" fill="#111"/><circle cx="5.3" cy="1" r="0.8" fill="#111"/></svg>
<svg style="left:1304px;top:373px" width="14" height="16" viewBox="0 0 14 16"><ellipse cx="2.6" cy="2.6" rx="1.8" ry="2" fill="none" stroke="#111" stroke-width="1.3"/><ellipse cx="2.6" cy="13.4" rx="1.8" ry="2" fill="none" stroke="#111" stroke-width="1.3"/><path d="M3.5 4.3 L5 8 L3.5 11.7" fill="none" stroke="#111" stroke-width="1.6"/><path d="M5 8 L12.5 3.5" stroke="#111" stroke-width="2.3" stroke-linecap="round"/><path d="M5 8 L12.5 12.2" stroke="#111" stroke-width="2.3" stroke-linecap="round"/><circle cx="5.2" cy="8" r="0.6" fill="#ddd"/></svg>
<svg style="left:1336.5px;top:373px" width="15.6" height="16" viewBox="0 0 15.6 16"><rect x="0" y="0" width="15.6" height="5.3" fill="#000"/><rect x="0" y="5.3" width="15.6" height="5.4" fill="#e20c17"/><rect x="0" y="10.7" width="15.6" height="5.3" fill="#fdcb2c"/></svg>
<div class="t" style="left:1357px;top:373.55px;font-size:13px;color:#222;font-weight:normal;letter-spacing:0.2px;">Deutsch (Standard)</div>
<div class="a" style="left:539px;top:402px;width:1037px;height:1.3px;background:#d6d6d6;"></div>
<svg style="left:552.3px;top:418px" width="17" height="14" viewBox="0 0 17 14"><rect x="6" y="0" width="4.6" height="4.2" fill="#6fa6ea"/><rect x="7.3" y="1.2" width="2" height="1.8" fill="#c9def8"/><path d="M2.6 7.6 V6.3 H13.9 V7.6 M8.3 5.2 V6.3" fill="none" stroke="#666" stroke-width="0.7"/><rect x="0" y="9" width="4.6" height="4.2" fill="#5cb85c"/><rect x="6" y="9" width="4.6" height="4.2" fill="#47a447"/><rect x="11.9" y="9" width="4.6" height="4.2" fill="#2d8a2d"/><rect x="1.5" y="10.3" width="1.6" height="1.6" fill="#bfe6bf"/><rect x="7.5" y="10.3" width="1.6" height="1.6" fill="#9fd69f"/><rect x="13.4" y="10.3" width="1.6" height="1.6" fill="#6fbf6f"/></svg>
<div class="t" style="left:581px;top:417.55px;font-size:13px;color:#222;font-weight:normal;letter-spacing:0.52px;">1/2018</div>
<div class="a" style="left:965px;top:408px;width:86px;height:32px;border:1px solid #cfcfcf;border-radius:2px;overflow:hidden;background:#e0e0e0">
<div class="a" style="left:-1px;top:0;width:29px;height:30px;background:#e0e0e0;border-left:0px solid #cfcfcf"></div>
<div class="a" style="left:28px;top:0;width:28px;height:30px;background:#e0e0e0;border-left:1px solid #cfcfcf"></div>
<div class="a" style="left:56px;top:0;width:29px;height:30px;background:#e0e0e0;border-left:1px solid #cfcfcf"></div>
</div>
<div class="a" style="left:1055px;top:408px;width:143px;height:32px;border:1px solid #cfcfcf;border-radius:2px;overflow:hidden;background:#e0e0e0">
<div class="a" style="left:-1px;top:0;width:29px;height:30px;background:#e0e0e0;border-left:0px solid #cfcfcf"></div>
<div class="a" style="left:28px;top:0;width:28px;height:30px;background:#e0e0e0;border-left:1px solid #cfcfcf"></div>
<div class="a" style="left:56px;top:0;width:29px;height:30px;background:#e0e0e0;border-left:1px solid #cfcfcf"></div>
<div class="a" style="left:85px;top:0;width:28px;height:30px;background:#e0e0e0;border-left:1px solid #cfcfcf"></div>
<div class="a" style="left:113px;top:0;width:29px;height:30px;background:#e0e0e0;border-left:1px solid #cfcfcf"></div>
</div>
<div class="a" style="left:1210px;top:408px;width:114px;height:32px;border:1px solid #cfcfcf;border-radius:2px;overflow:hidden;background:#e0e0e0">
<div class="a" style="left:-1px;top:0;width:29px;height:30px;background:#e8e8e8;border-left:0px solid #cfcfcf"></div>
<div class="a" style="left:28px;top:0;width:28px;height:30px;background:#e8e8e8;border-left:1px solid #cfcfcf"></div>
<div class="a" style="left:56px;top:0;width:29px;height:30px;background:#e0e0e0;border-left:1px solid #cfcfcf"></div>
<div class="a" style="left:85px;top:0;width:28px;height:30px;background:#e0e0e0;border-left:1px solid #cfcfcf"></div>
</div>
<svg style="left:972px;top:417px" width="16" height="16" viewBox="0 0 16 16"><path d="M1 15 L2 11 L11.5 1.5 L14.5 4.5 L5 14 Z" fill="#111"/><path d="M2.3 12 L4 13.7" stroke="#e0e0e0" stroke-width="0.8"/><path d="M10.5 2.5 L13.5 5.5" stroke="#e0e0e0" stroke-width="0.8"/></svg>
<svg style="left:1000px;top:418px" width="16" height="14" viewBox="0 0 16 14"><rect x="0" y="2" width="16" height="10" rx="5" fill="#111"/><circle cx="11" cy="7" r="3.3" fill="#fff"/></svg>
<svg style="left:1030px;top:417px" width="13" height="15" viewBox="0 0 13 15"><path d="M0.5 2.6 H12 " stroke="#111" stroke-width="1.3"/><path d="M4.3 2.3 V0.8 H8.2 V2.3" fill="none" stroke="#111" stroke-width="1.1"/><path d="M1.6 3.2 V13.6 Q1.6 14.3 2.3 14.3 H10.2 Q10.9 14.3 10.9 13.6 V3.2" fill="none" stroke="#111" stroke-width="1.3"/><path d="M4.8 4.8 V12.5 M7.7 4.8 V12.5" stroke="#111" stroke-width="1.1"/></svg>
<svg style="left:1067px;top:418px" width="7" height="13" viewBox="0 0 7 13"><rect x="2" y="1" width="3" height="2.2" fill="#111"/><path d="M0.5 4.3 H5 V11 H6.5 V13 H0.5 V11 H2 V6.3 H0.5 Z" fill="#111"/></svg>
<svg style="left:1091px;top:417px" width="16" height="16" viewBox="0 0 16 16"><path d="M3.2 4.2 A6 6 0 1 1 2.6 10.5" fill="none" stroke="#111" stroke-width="1.6"/><path d="M0.5 1.8 L1.2 6.8 L5.6 5.4 Z" fill="#111"/><path d="M8 4.5 V8.5 H5.5" fill="none" stroke="#111" stroke-width="1.5"/></svg>
<svg style="left:1122px;top:420px" width="10" height="10" viewBox="0 0 10 10"><path d="M5 0 V10 M0 5 H10" stroke="#111" stroke-width="2.1"/></svg>
<svg style="left:1150.5px;top:421.6px" width="9.5" height="7" viewBox="0 0 9.5 7"><path d="M0 6.5 L4.75 0 L9.5 6.5 Z" fill="#111"/></svg>
<svg style="left:1179px;top:422px" width="10" height="8" viewBox="0 0 10 8"><path d="M0 0 L4.75 7 L9.5 0 Z" fill="#111"/></svg>
<svg style="left:1276px;top:418px" width="11" height="15" viewBox="0 0 11 15"><rect x="0.8" y="1.6" width="9" height="12.6" rx="0.6" fill="none" stroke="#111" stroke-width="1.3"/><path d="M3 1.6 H7.6 L6.5 3 H4.1 Z" fill="#111"/><circle cx="5.3" cy="1" r="0.8" fill="#111"/></svg>
<svg style="left:1304px;top:417px" width="14" height="16" viewBox="0 0 14 16"><ellipse cx="2.6" cy="2.6" rx="1.8" ry="2" fill="none" stroke="#111" stroke-width="1.3"/><ellipse cx="2.6" cy="13.4" rx="1.8" ry="2" fill="none" stroke="#111" stroke-width="1.3"/><path d="M3.5 4.3 L5 8 L3.5 11.7" fill="none" stroke="#111" stroke-width="1.6"/><path d="M5 8 L12.5 3.5" stroke="#111" stroke-width="2.3" stroke-linecap="round"/><path d="M5 8 L12.5 12.2" stroke="#111" stroke-width="2.3" stroke-linecap="round"/><circle cx="5.2" cy="8" r="0.6" fill="#ddd"/></svg>
<svg style="left:1336.5px;top:417px" width="15.6" height="16" viewBox="0 0 15.6 16"><rect x="0" y="0" width="15.6" height="5.3" fill="#000"/><rect x="0" y="5.3" width="15.6" height="5.4" fill="#e20c17"/><rect x="0" y="10.7" width="15.6" height="5.3" fill="#fdcb2c"/></svg>
<div class="t" style="left:1357px;top:417.55px;font-size:13px;color:#222;font-weight:normal;letter-spacing:0.2px;">Deutsch (Standard)</div>
<div class="a" style="left:539px;top:446px;width:1037px;height:1.3px;background:#d6d6d6;"></div>
<svg style="left:552.3px;top:462px" width="17" height="14" viewBox="0 0 17 14"><rect x="6" y="0" width="4.6" height="4.2" fill="#6fa6ea"/><rect x="7.3" y="1.2" width="2" height="1.8" fill="#c9def8"/><path d="M2.6 7.6 V6.3 H13.9 V7.6 M8.3 5.2 V6.3" fill="none" stroke="#666" stroke-width="0.7"/><rect x="0" y="9" width="4.6" height="4.2" fill="#5cb85c"/><rect x="6" y="9" width="4.6" height="4.2" fill="#47a447"/><rect x="11.9" y="9" width="4.6" height="4.2" fill="#2d8a2d"/><rect x="1.5" y="10.3" width="1.6" height="1.6" fill="#bfe6bf"/><rect x="7.5" y="10.3" width="1.6" height="1.6" fill="#9fd69f"/><rect x="13.4" y="10.3" width="1.6" height="1.6" fill="#6fbf6f"/></svg>
<div class="t" style="left:581px;top:461.55px;font-size:13px;color:#222;font-weight:normal;letter-spacing:0.52px;">2/2017</div>
<div class="a" style="left:965px;top:452px;width:86px;height:32px;border:1px solid #cfcfcf;border-radius:2px;overflow:hidden;background:#e0e0e0">
<div class="a" style="left:-1px;top:0;width:29px;height:30px;background:#e0e0e0;border-left:0px solid #cfcfcf"></div>
<div class="a" style="left:28px;top:0;width:28px;height:30px;background:#e0e0e0;border-left:1px solid #cfcfcf"></div>
<div class="a" style="left:56px;top:0;width:29px;height:30px;background:#e0e0e0;border-left:1px solid #cfcfcf"></div>
</div>
<div class="a" style="left:1055px;top:452px;width:143px;height:32px;border:1px solid #cfcfcf;border-radius:2px;overflow:hidden;background:#e0e0e0">
<div class="a" style="left:-1px;top:0;width:29px;height:30px;background:#e0e0e0;border-left:0px solid #cfcfcf"></div>
<div class="a" style="left:28px;top:0;width:28px;height:30px;background:#e0e0e0;border-left:1px solid #cfcfcf"></div>
<div class="a" style="left:56px;top:0;width:29px;height:30px;background:#e0e0e0;border-left:1px solid #cfcfcf"></div>
<div class="a" style="left:85px;top:0;width:28px;height:30px;background:#e0e0e0;border-left:1px solid #cfcfcf"></div>
<div class="a" style="left:113px;top:0;width:29px;height:30px;background:#e0e0e0;border-left:1px solid #cfcfcf"></div>
</div>
<div class="a" style="left:1210px;top:452px;width:114px;height:32px;border:1px solid #cfcfcf;border-radius:2px;overflow:hidden;background:#e0e0e0">
<div class="a" style="left:-1px;top:0;width:29px;height:30px;background:#e8e8e8;border-left:0px solid #cfcfcf"></div>
<div class="a" style="left:28px;top:0;width:28px;height:30px;background:#e8e8e8;border-left:1px solid #cfcfcf"></div>
<div class="a" style="left:56px;top:0;width:29px;height:30px;background:#e0e0e0;border-left:1px solid #cfcfcf"></div>
<div class="a" style="left:85px;top:0;width:28px;height:30px;background:#e0e0e0;border-left:1px solid #cfcfcf"></div>
</div>
<svg style="left:972px;top:461px" width="16" height="16" viewBox="0 0 16 16"><path d="M1 15 L2 11 L11.5 1.5 L14.5 4.5 L5 14 Z" fill="#111"/><path d="M2.3 12 L4 13.7" stroke="#e0e0e0" stroke-width="0.8"/><path d="M10.5 2.5 L13.5 5.5" stroke="#e0e0e0" stroke-width="0.8"/></svg>
<svg style="left:1000px;top:462px" width="16" height="14" viewBox="0 0 16 14"><rect x="0" y="2" width="16" height="10" rx="5" fill="#111"/><circle cx="11" cy="7" r="3.3" fill="#fff"/></svg>
<svg style="left:1030px;top:461px" width="13" height="15" viewBox="0 0 13 15"><path d="M0.5 2.6 H12 " stroke="#111" stroke-width="1.3"/><path d="M4.3 2.3 V0.8 H8.2 V2.3" fill="none" stroke="#111" stroke-width="1.1"/><path d="M1.6 3.2 V13.6 Q1.6 14.3 2.3 14.3 H10.2 Q10.9 14.3 10.9 13.6 V3.2" fill="none" stroke="#111" stroke-width="1.3"/><path d="M4.8 4.8 V12.5 M7.7 4.8 V12.5" stroke="#111" stroke-width="1.1"/></svg>
<svg style="left:1067px;top:462px" width="7" height="13" viewBox="0 0 7 13"><rect x="2" y="1" width="3" height="2.2" fill="#111"/><path d="M0.5 4.3 H5 V11 H6.5 V13 H0.5 V11 H2 V6.3 H0.5 Z" fill="#111"/></svg>
<svg style="left:1091px;top:461px" width="16" height="16" viewBox="0 0 16 16"><path d="M3.2 4.2 A6 6 0 1 1 2.6 10.5" fill="none" stroke="#111" stroke-width="1.6"/><path d="M0.5 1.8 L1.2 6.8 L5.6 5.4 Z" fill="#111"/><path d="M8 4.5 V8.5 H5.5" fill="none" stroke="#111" stroke-width="1.5"/></svg>
<svg style="left:1122px;top:464px" width="10" height="10" viewBox="0 0 10 10"><path d="M5 0 V10 M0 5 H10" stroke="#111" stroke-width="2.1"/></svg>
<svg style="left:1150.5px;top:465.6px" width="9.5" height="7" viewBox="0 0 9.5 7"><path d="M0 6.5 L4.75 0 L9.5 6.5 Z" fill="#111"/></svg>
<svg style="left:1179px;top:466px" width="10" height="8" viewBox="0 0 10 8"><path d="M0 0 L4.75 7 L9.5 0 Z" fill="#111"/></svg>
<svg style="left:1276px;top:462px" width="11" height="15" viewBox="0 0 11 15"><rect x="0.8" y="1.6" width="9" height="12.6" rx="0.6" fill="none" stroke="#111" stroke-width="1.3"/><path d="M3 1.6 H7.6 L6.5 3 H4.1 Z" fill="#111"/><circle cx="5.3" cy="1" r="0.8" fill="#111"/></svg>
<svg style="left:1304px;top:461px" width="14" height="16" viewBox="0 0 14 16"><ellipse cx="2.6" cy="2.6" rx="1.8" ry="2" fill="none" stroke="#111" stroke-width="1.3"/><ellipse cx="2.6" cy="13.4" rx="1.8" ry="2" fill="none" stroke="#111" stroke-width="1.3"/><path d="M3.5 4.3 L5 8 L3.5 11.7" fill="none" stroke="#111" stroke-width="1.6"/><path d="M5 8 L12.5 3.5" stroke="#111" stroke-width="2.3" stroke-linecap="round"/><path d="M5 8 L12.5 12.2" stroke="#111" stroke-width="2.3" stroke-linecap="round"/><circle cx="5.2" cy="8" r="0.6" fill="#ddd"/></svg>
<svg style="left:1336.5px;top:461px" width="15.6" height="16" viewBox="0 0 15.6 16"><rect x="0" y="0" width="15.6" height="5.3" fill="#000"/><rect x="0" y="5.3" width="15.6" height="5.4" fill="#e20c17"/><rect x="0" y="10.7" width="15.6" height="5.3" fill="#fdcb2c"/></svg>
<div class="t" style="left:1357px;top:461.55px;font-size:13px;color:#222;font-weight:normal;letter-spacing:0.2px;">Deutsch (Standard)</div>
<div class="a" style="left:539px;top:490px;width:1037px;height:1.3px;background:#d6d6d6;"></div>
<svg style="left:552.3px;top:506px" width="17" height="14" viewBox="0 0 17 14"><rect x="6" y="0" width="4.6" height="4.2" fill="#6fa6ea"/><rect x="7.3" y="1.2" width="2" height="1.8" fill="#c9def8"/><path d="M2.6 7.6 V6.3 H13.9 V7.6 M8.3 5.2 V6.3" fill="none" stroke="#666" stroke-width="0.7"/><rect x="0" y="9" width="4.6" height="4.2" fill="#5cb85c"/><rect x="6" y="9" width="4.6" height="4.2" fill="#47a447"/><rect x="11.9" y="9" width="4.6" height="4.2" fill="#2d8a2d"/><rect x="1.5" y="10.3" width="1.6" height="1.6" fill="#bfe6bf"/><rect x="7.5" y="10.3" width="1.6" height="1.6" fill="#9fd69f"/><rect x="13.4" y="10.3" width="1.6" height="1.6" fill="#6fbf6f"/></svg>
<div class="t" style="left:581px;top:505.55px;font-size:13px;color:#222;font-weight:normal;letter-spacing:0.52px;">1/2017</div>
<div class="a" style="left:965px;top:496px;width:86px;height:32px;border:1px solid #cfcfcf;border-radius:2px;overflow:hidden;background:#e0e0e0">
<div class="a" style="left:-1px;top:0;width:29px;height:30px;background:#e0e0e0;border-left:0px solid #cfcfcf"></div>
<div class="a" style="left:28px;top:0;width:28px;height:30px;background:#e0e0e0;border-left:1px solid #cfcfcf"></div>
<div class="a" style="left:56px;top:0;width:29px;height:30px;background:#e0e0e0;border-left:1px solid #cfcfcf"></div>
</div>
<div class="a" style="left:1055px;top:496px;width:143px;height:32px;border:1px solid #cfcfcf;border-radius:2px;overflow:hidden;background:#e0e0e0">
<div class="a" style="left:-1px;top:0;width:29px;height:30px;background:#e0e0e0;border-left:0px solid #cfcfcf"></div>
<div class="a" style="left:28px;top:0;width:28px;height:30px;background:#e0e0e0;border-left:1px solid #cfcfcf"></div>
<div class="a" style="left:56px;top:0;width:29px;height:30px;background:#e0e0e0;border-left:1px solid #cfcfcf"></div>
<div class="a" style="left:85px;top:0;width:28px;height:30px;background:#e0e0e0;border-left:1px solid #cfcfcf"></div>
<div class="a" style="left:113px;top:0;width:29px;height:30px;background:#e0e0e0;border-left:1px solid #cfcfcf"></div>
</div>
<div class="a" style="left:1210px;top:496px;width:114px;height:32px;border:1px solid #cfcfcf;border-radius:2px;overflow:hidden;background:#e0e0e0">
<div class="a" style="left:-1px;top:0;width:29px;height:30px;background:#e8e8e8;border-left:0px solid #cfcfcf"></div>
<div class="a" style="left:28px;top:0;width:28px;height:30px;background:#e8e8e8;border-left:1px solid #cfcfcf"></div>
<div class="a" style="left:56px;top:0;width:29px;height:30px;background:#e0e0e0;border-left:1px solid #cfcfcf"></div>
<div class="a" style="left:85px;top:0;width:28px;height:30px;background:#e0e0e0;border-left:1px solid #cfcfcf"></div>
</div>
<svg style="left:972px;top:505px" width="16" height="16" viewBox="0 0 16 16"><path d="M1 15 L2 11 L11.5 1.5 L14.5 4.5 L5 14 Z" fill="#111"/><path d="M2.3 12 L4 13.7" stroke="#e0e0e0" stroke-width="0.8"/><path d="M10.5 2.5 L13.5 5.5" stroke="#e0e0e0" stroke-width="0.8"/></svg>
<svg style="left:1000px;top:506px" width="16" height="14" viewBox="0 0 16 14"><rect x="0" y="2" width="16" height="10" rx="5" fill="#111"/><circle cx="11" cy="7" r="3.3" fill="#fff"/></svg>
<svg style="left:1030px;top:505px" width="13" height="15" viewBox="0 0 13 15"><path d="M0.5 2.6 H12 " stroke="#111" stroke-width="1.3"/><path d="M4.3 2.3 V0.8 H8.2 V2.3" fill="none" stroke="#111" stroke-width="1.1"/><path d="M1.6 3.2 V13.6 Q1.6 14.3 2.3 14.3 H10.2 Q10.9 14.3 10.9 13.6 V3.2" fill="none" stroke="#111" stroke-width="1.3"/><path d="M4.8 4.8 V12.5 M7.7 4.8 V12.5" stroke="#111" stroke-width="1.1"/></svg>
<svg style="left:1067px;top:506px" width="7" height="13" viewBox="0 0 7 13"><rect x="2" y="1" width="3" height="2.2" fill="#111"/><path d="M0.5 4.3 H5 V11 H6.5 V13 H0.5 V11 H2 V6.3 H0.5 Z" fill="#111"/></svg>
<svg style="left:1091px;top:505px" width="16" height="16" viewBox="0 0 16 16"><path d="M3.2 4.2 A6 6 0 1 1 2.6 10.5" fill="none" stroke="#111" stroke-width="1.6"/><path d="M0.5 1.8 L1.2 6.8 L5.6 5.4 Z" fill="#111"/><path d="M8 4.5 V8.5 H5.5" fill="none" stroke="#111" stroke-width="1.5"/></svg>
<svg style="left:1122px;top:508px" width="10" height="10" viewBox="0 0 10 10"><path d="M5 0 V10 M0 5 H10" stroke="#111" stroke-width="2.1"/></svg>
<svg style="left:1150.5px;top:509.6px" width="9.5" height="7" viewBox="0 0 9.5 7"><path d="M0 6.5 L4.75 0 L9.5 6.5 Z" fill="#111"/></svg>
<svg style="left:1179px;top:510px" width="10" height="8" viewBox="0 0 10 8"><path d="M0 0 L4.75 7 L9.5 0 Z" fill="#111"/></svg>
<svg style="left:1276px;top:506px" width="11" height="15" viewBox="0 0 11 15"><rect x="0.8" y="1.6" width="9" height="12.6" rx="0.6" fill="none" stroke="#111" stroke-width="1.3"/><path d="M3 1.6 H7.6 L6.5 3 H4.1 Z" fill="#111"/><circle cx="5.3" cy="1" r="0.8" fill="#111"/></svg>
<svg style="left:1304px;top:505px" width="14" height="16" viewBox="0 0 14 16"><ellipse cx="2.6" cy="2.6" rx="1.8" ry="2" fill="none" stroke="#111" stroke-width="1.3"/><ellipse cx="2.6" cy="13.4" rx="1.8" ry="2" fill="none" stroke="#111" stroke-width="1.3"/><path d="M3.5 4.3 L5 8 L3.5 11.7" fill="none" stroke="#111" stroke-width="1.6"/><path d="M5 8 L12.5 3.5" stroke="#111" stroke-width="2.3" stroke-linecap="round"/><path d="M5 8 L12.5 12.2" stroke="#111" stroke-width="2.3" stroke-linecap="round"/><circle cx="5.2" cy="8" r="0.6" fill="#ddd"/></svg>
<svg style="left:1336.5px;top:505px" width="15.6" height="16" viewBox="0 0 15.6 16"><rect x="0" y="0" width="15.6" height="5.3" fill="#000"/><rect x="0" y="5.3" width="15.6" height="5.4" fill="#e20c17"/><rect x="0" y="10.7" width="15.6" height="5.3" fill="#fdcb2c"/></svg>
<div class="t" style="left:1357px;top:505.55px;font-size:13px;color:#222;font-weight:normal;letter-spacing:0.2px;">Deutsch (Standard)</div>
<div class="a" style="left:539px;top:534px;width:1037px;height:1.3px;background:#d6d6d6;"></div>
<svg style="left:552.3px;top:550px" width="17" height="14" viewBox="0 0 17 14"><rect x="6" y="0" width="4.6" height="4.2" fill="#6fa6ea"/><rect x="7.3" y="1.2" width="2" height="1.8" fill="#c9def8"/><path d="M2.6 7.6 V6.3 H13.9 V7.6 M8.3 5.2 V6.3" fill="none" stroke="#666" stroke-width="0.7"/><rect x="0" y="9" width="4.6" height="4.2" fill="#5cb85c"/><rect x="6" y="9" width="4.6" height="4.2" fill="#47a447"/><rect x="11.9" y="9" width="4.6" height="4.2" fill="#2d8a2d"/><rect x="1.5" y="10.3" width="1.6" height="1.6" fill="#bfe6bf"/><rect x="7.5" y="10.3" width="1.6" height="1.6" fill="#9fd69f"/><rect x="13.4" y="10.3" width="1.6" height="1.6" fill="#6fbf6f"/></svg>
<div class="t" style="left:581px;top:549.55px;font-size:13px;color:#222;font-weight:normal;letter-spacing:0.52px;">2/2016</div>
<div class="a" style="left:965px;top:540px;width:86px;height:32px;border:1px solid #cfcfcf;border-radius:2px;overflow:hidden;background:#e0e0e0">
<div class="a" style="left:-1px;top:0;width:29px;height:30px;background:#e0e0e0;border-left:0px solid #cfcfcf"></div>
<div class="a" style="left:28px;top:0;width:28px;height:30px;background:#e0e0e0;border-left:1px solid #cfcfcf"></div>
<div class="a" style="left:56px;top:0;width:29px;height:30px;background:#e0e0e0;border-left:1px solid #cfcfcf"></div>
</div>
<div class="a" style="left:1055px;top:540px;width:143px;height:32px;border:1px solid #cfcfcf;border-radius:2px;overflow:hidden;background:#e0e0e0">
<div class="a" style="left:-1px;top:0;width:29px;height:30px;background:#e0e0e0;border-left:0px solid #cfcfcf"></div>
<div class="a" style="left:28px;top:0;width:28px;height:30px;background:#e0e0e0;border-left:1px solid #cfcfcf"></div>
<div class="a" style="left:56px;top:0;width:29px;height:30px;background:#e0e0e0;border-left:1px solid #cfcfcf"></div>
<div class="a" style="left:85px;top:0;width:28px;height:30px;background:#e0e0e0;border-left:1px solid #cfcfcf"></div>
<div class="a" style="left:113px;top:0;width:29px;height:30px;background:#e0e0e0;border-left:1px solid #cfcfcf"></div>
</div>
<div class="a" style="left:1210px;top:540px;width:114px;height:32px;border:1px solid #cfcfcf;border-radius:2px;overflow:hidden;background:#e0e0e0">
<div class="a" style="left:-1px;top:0;width:29px;height:30px;background:#e8e8e8;border-left:0px solid #cfcfcf"></div>
<div class="a" style="left:28px;top:0;width:28px;height:30px;background:#e8e8e8;border-left:1px solid #cfcfcf"></div>
<div class="a" style="left:56px;top:0;width:29px;height:30px;background:#e0e0e0;border-left:1px solid #cfcfcf"></div>
<div class="a" style="left:85px;top:0;width:28px;height:30px;background:#e0e0e0;border-left:1px solid #cfcfcf"></div>
</div>
<svg style="left:972px;top:549px" width="16" height="16" viewBox="0 0 16 16"><path d="M1 15 L2 11 L11.5 1.5 L14.5 4.5 L5 14 Z" fill="#111"/><path d="M2.3 12 L4 13.7" stroke="#e0e0e0" stroke-width="0.8"/><path d="M10.5 2.5 L13.5 5.5" stroke="#e0e0e0" stroke-width="0.8"/></svg>
<svg style="left:1000px;top:550px" width="16" height="14" viewBox="0 0 16 14"><rect x="0" y="2" width="16" height="10" rx="5" fill="#111"/><circle cx="11" cy="7" r="3.3" fill="#fff"/></svg>
<svg style="left:1030px;top:549px" width="13" height="15" viewBox="0 0 13 15"><path d="M0.5 2.6 H12 " stroke="#111" stroke-width="1.3"/><path d="M4.3 2.3 V0.8 H8.2 V2.3" fill="none" stroke="#111" stroke-width="1.1"/><path d="M1.6 3.2 V13.6 Q1.6 14.3 2.3 14.3 H10.2 Q10.9 14.3 10.9 13.6 V3.2" fill="none" stroke="#111" stroke-width="1.3"/><path d="M4.8 4.8 V12.5 M7.7 4.8 V12.5" stroke="#111" stroke-width="1.1"/></svg>
<svg style="left:1067px;top:550px" width="7" height="13" viewBox="0 0 7 13"><rect x="2" y="1" width="3" height="2.2" fill="#111"/><path d="M0.5 4.3 H5 V11 H6.5 V13 H0.5 V11 H2 V6.3 H0.5 Z" fill="#111"/></svg>
<svg style="left:1091px;top:549px" width="16" height="16" viewBox="0 0 16 16"><path d="M3.2 4.2 A6 6 0 1 1 2.6 10.5" fill="none" stroke="#111" stroke-width="1.6"/><path d="M0.5 1.8 L1.2 6.8 L5.6 5.4 Z" fill="#111"/><path d="M8 4.5 V8.5 H5.5" fill="none" stroke="#111" stroke-width="1.5"/></svg>
<svg style="left:1122px;top:552px" width="10" height="10" viewBox="0 0 10 10"><path d="M5 0 V10 M0 5 H10" stroke="#111" stroke-width="2.1"/></svg>
<svg style="left:1150.5px;top:553.6px" width="9.5" height="7" viewBox="0 0 9.5 7"><path d="M0 6.5 L4.75 0 L9.5 6.5 Z" fill="#111"/></svg>
<svg style="left:1179px;top:554px" width="10" height="8" viewBox="0 0 10 8"><path d="M0 0 L4.75 7 L9.5 0 Z" fill="#111"/></svg>
<svg style="left:1276px;top:550px" width="11" height="15" viewBox="0 0 11 15"><rect x="0.8" y="1.6" width="9" height="12.6" rx="0.6" fill="none" stroke="#111" stroke-width="1.3"/><path d="M3 1.6 H7.6 L6.5 3 H4.1 Z" fill="#111"/><circle cx="5.3" cy="1" r="0.8" fill="#111"/></svg>
<svg style="left:1304px;top:549px" width="14" height="16" viewBox="0 0 14 16"><ellipse cx="2.6" cy="2.6" rx="1.8" ry="2" fill="none" stroke="#111" stroke-width="1.3"/><ellipse cx="2.6" cy="13.4" rx="1.8" ry="2" fill="none" stroke="#111" stroke-width="1.3"/><path d="M3.5 4.3 L5 8 L3.5 11.7" fill="none" stroke="#111" stroke-width="1.6"/><path d="M5 8 L12.5 3.5" stroke="#111" stroke-width="2.3" stroke-linecap="round"/><path d="M5 8 L12.5 12.2" stroke="#111" stroke-width="2.3" stroke-linecap="round"/><circle cx="5.2" cy="8" r="0.6" fill="#ddd"/></svg>
<svg style="left:1336.5px;top:549px" width="15.6" height="16" viewBox="0 0 15.6 16"><rect x="0" y="0" width="15.6" height="5.3" fill="#000"/><rect x="0" y="5.3" width="15.6" height="5.4" fill="#e20c17"/><rect x="0" y="10.7" width="15.6" height="5.3" fill="#fdcb2c"/></svg>
<div class="t" style="left:1357px;top:549.55px;font-size:13px;color:#222;font-weight:normal;letter-spacing:0.2px;">Deutsch (Standard)</div>
<div class="a" style="left:539px;top:579px;width:1037px;height:1.3px;background:#d6d6d6;"></div>
<svg style="left:552.3px;top:595px" width="17" height="14" viewBox="0 0 17 14"><rect x="6" y="0" width="4.6" height="4.2" fill="#6fa6ea"/><rect x="7.3" y="1.2" width="2" height="1.8" fill="#c9def8"/><path d="M2.6 7.6 V6.3 H13.9 V7.6 M8.3 5.2 V6.3" fill="none" stroke="#666" stroke-width="0.7"/><rect x="0" y="9" width="4.6" height="4.2" fill="#5cb85c"/><rect x="6" y="9" width="4.6" height="4.2" fill="#47a447"/><rect x="11.9" y="9" width="4.6" height="4.2" fill="#2d8a2d"/><rect x="1.5" y="10.3" width="1.6" height="1.6" fill="#bfe6bf"/><rect x="7.5" y="10.3" width="1.6" height="1.6" fill="#9fd69f"/><rect x="13.4" y="10.3" width="1.6" height="1.6" fill="#6fbf6f"/></svg>
<div class="t" style="left:581px;top:594.55px;font-size:13px;color:#222;font-weight:normal;letter-spacing:0.52px;">1/2016</div>
<div class="a" style="left:965px;top:585px;width:86px;height:32px;border:1px solid #cfcfcf;border-radius:2px;overflow:hidden;background:#e0e0e0">
<div class="a" style="left:-1px;top:0;width:29px;height:30px;background:#e0e0e0;border-left:0px solid #cfcfcf"></div>
<div class="a" style="left:28px;top:0;width:28px;height:30px;background:#e0e0e0;border-left:1px solid #cfcfcf"></div>
<div class="a" style="left:56px;top:0;width:29px;height:30px;background:#e0e0e0;border-left:1px solid #cfcfcf"></div>
</div>
<div class="a" style="left:1055px;top:585px;width:143px;height:32px;border:1px solid #cfcfcf;border-radius:2px;overflow:hidden;background:#e0e0e0">
<div class="a" style="left:-1px;top:0;width:29px;height:30px;background:#e0e0e0;border-left:0px solid #cfcfcf"></div>
<div class="a" style="left:28px;top:0;width:28px;height:30px;background:#e0e0e0;border-left:1px solid #cfcfcf"></div>
<div class="a" style="left:56px;top:0;width:29px;height:30px;background:#e0e0e0;border-left:1px solid #cfcfcf"></div>
<div class="a" style="left:85px;top:0;width:28px;height:30px;background:#e0e0e0;border-left:1px solid #cfcfcf"></div>
<div class="a" style="left:113px;top:0;width:29px;height:30px;background:#e0e0e0;border-left:1px solid #cfcfcf"></div>
</div>
<div class="a" style="left:1210px;top:585px;width:114px;height:32px;border:1px solid #cfcfcf;border-radius:2px;overflow:hidden;background:#e0e0e0">
<div class="a" style="left:-1px;top:0;width:29px;height:30px;background:#e8e8e8;border-left:0px solid #cfcfcf"></div>
<div class="a" style="left:28px;top:0;width:28px;height:30px;background:#e8e8e8;border-left:1px solid #cfcfcf"></div>
<div class="a" style="left:56px;top:0;width:29px;height:30px;background:#e0e0e0;border-left:1px solid #cfcfcf"></div>
<div class="a" style="left:85px;top:0;width:28px;height:30px;background:#e0e0e0;border-left:1px solid #cfcfcf"></div>
</div>
<svg style="left:972px;top:594px" width="16" height="16" viewBox="0 0 16 16"><path d="M1 15 L2 11 L11.5 1.5 L14.5 4.5 L5 14 Z" fill="#111"/><path d="M2.3 12 L4 13.7" stroke="#e0e0e0" stroke-width="0.8"/><path d="M10.5 2.5 L13.5 5.5" stroke="#e0e0e0" stroke-width="0.8"/></svg>
<svg style="left:1000px;top:595px" width="16" height="14" viewBox="0 0 16 14"><rect x="0" y="2" width="16" height="10" rx="5" fill="#111"/><circle cx="11" cy="7" r="3.3" fill="#fff"/></svg>
<svg style="left:1030px;top:594px" width="13" height="15" viewBox="0 0 13 15"><path d="M0.5 2.6 H12 " stroke="#111" stroke-width="1.3"/><path d="M4.3 2.3 V0.8 H8.2 V2.3" fill="none" stroke="#111" stroke-width="1.1"/><path d="M1.6 3.2 V13.6 Q1.6 14.3 2.3 14.3 H10.2 Q10.9 14.3 10.9 13.6 V3.2" fill="none" stroke="#111" stroke-width="1.3"/><path d="M4.8 4.8 V12.5 M7.7 4.8 V12.5" stroke="#111" stroke-width="1.1"/></svg>
<svg style="left:1067px;top:595px" width="7" height="13" viewBox="0 0 7 13"><rect x="2" y="1" width="3" height="2.2" fill="#111"/><path d="M0.5 4.3 H5 V11 H6.5 V13 H0.5 V11 H2 V6.3 H0.5 Z" fill="#111"/></svg>
<svg style="left:1091px;top:594px" width="16" height="16" viewBox="0 0 16 16"><path d="M3.2 4.2 A6 6 0 1 1 2.6 10.5" fill="none" stroke="#111" stroke-width="1.6"/><path d="M0.5 1.8 L1.2 6.8 L5.6 5.4 Z" fill="#111"/><path d="M8 4.5 V8.5 H5.5" fill="none" stroke="#111" stroke-width="1.5"/></svg>
<svg style="left:1122px;top:597px" width="10" height="10" viewBox="0 0 10 10"><path d="M5 0 V10 M0 5 H10" stroke="#111" stroke-width="2.1"/></svg>
<svg style="left:1150.5px;top:598.6px" width="9.5" height="7" viewBox="0 0 9.5 7"><path d="M0 6.5 L4.75 0 L9.5 6.5 Z" fill="#111"/></svg>
<svg style="left:1179px;top:599px" width="10" height="8" viewBox="0 0 10 8"><path d="M0 0 L4.75 7 L9.5 0 Z" fill="#111"/></svg>
<svg style="left:1276px;top:595px" width="11" height="15" viewBox="0 0 11 15"><rect x="0.8" y="1.6" width="9" height="12.6" rx="0.6" fill="none" stroke="#111" stroke-width="1.3"/><path d="M3 1.6 H7.6 L6.5 3 H4.1 Z" fill="#111"/><circle cx="5.3" cy="1" r="0.8" fill="#111"/></svg>
<svg style="left:1304px;top:594px" width="14" height="16" viewBox="0 0 14 16"><ellipse cx="2.6" cy="2.6" rx="1.8" ry="2" fill="none" stroke="#111" stroke-width="1.3"/><ellipse cx="2.6" cy="13.4" rx="1.8" ry="2" fill="none" stroke="#111" stroke-width="1.3"/><path d="M3.5 4.3 L5 8 L3.5 11.7" fill="none" stroke="#111" stroke-width="1.6"/><path d="M5 8 L12.5 3.5" stroke="#111" stroke-width="2.3" stroke-linecap="round"/><path d="M5 8 L12.5 12.2" stroke="#111" stroke-width="2.3" stroke-linecap="round"/><circle cx="5.2" cy="8" r="0.6" fill="#ddd"/></svg>
<svg style="left:1336.5px;top:594px" width="15.6" height="16" viewBox="0 0 15.6 16"><rect x="0" y="0" width="15.6" height="5.3" fill="#000"/><rect x="0" y="5.3" width="15.6" height="5.4" fill="#e20c17"/><rect x="0" y="10.7" width="15.6" height="5.3" fill="#fdcb2c"/></svg>
<div class="t" style="left:1357px;top:594.55px;font-size:13px;color:#222;font-weight:normal;letter-spacing:0.2px;">Deutsch (Standard)</div>
<div class="a" style="left:539px;top:623px;width:1037px;height:1.3px;background:#d6d6d6;"></div>
<svg style="left:552.3px;top:639px" width="17" height="14" viewBox="0 0 17 14"><rect x="6" y="0" width="4.6" height="4.2" fill="#6fa6ea"/><rect x="7.3" y="1.2" width="2" height="1.8" fill="#c9def8"/><path d="M2.6 7.6 V6.3 H13.9 V7.6 M8.3 5.2 V6.3" fill="none" stroke="#666" stroke-width="0.7"/><rect x="0" y="9" width="4.6" height="4.2" fill="#5cb85c"/><rect x="6" y="9" width="4.6" height="4.2" fill="#47a447"/><rect x="11.9" y="9" width="4.6" height="4.2" fill="#2d8a2d"/><rect x="1.5" y="10.3" width="1.6" height="1.6" fill="#bfe6bf"/><rect x="7.5" y="10.3" width="1.6" height="1.6" fill="#9fd69f"/><rect x="13.4" y="10.3" width="1.6" height="1.6" fill="#6fbf6f"/></svg>
<div class="t" style="left:581px;top:638.55px;font-size:13px;color:#222;font-weight:normal;letter-spacing:0.52px;">2/2015</div>
<div class="a" style="left:965px;top:629px;width:86px;height:32px;border:1px solid #cfcfcf;border-radius:2px;overflow:hidden;background:#e0e0e0">
<div class="a" style="left:-1px;top:0;width:29px;height:30px;background:#e0e0e0;border-left:0px solid #cfcfcf"></div>
<div class="a" style="left:28px;top:0;width:28px;height:30px;background:#e0e0e0;border-left:1px solid #cfcfcf"></div>
<div class="a" style="left:56px;top:0;width:29px;height:30px;background:#e0e0e0;border-left:1px solid #cfcfcf"></div>
</div>
<div class="a" style="left:1055px;top:629px;width:143px;height:32px;border:1px solid #cfcfcf;border-radius:2px;overflow:hidden;background:#e0e0e0">
<div class="a" style="left:-1px;top:0;width:29px;height:30px;background:#e0e0e0;border-left:0px solid #cfcfcf"></div>
<div class="a" style="left:28px;top:0;width:28px;height:30px;background:#e0e0e0;border-left:1px solid #cfcfcf"></div>
<div class="a" style="left:56px;top:0;width:29px;height:30px;background:#e0e0e0;border-left:1px solid #cfcfcf"></div>
<div class="a" style="left:85px;top:0;width:28px;height:30px;background:#e0e0e0;border-left:1px solid #cfcfcf"></div>
<div class="a" style="left:113px;top:0;width:29px;height:30px;background:#e0e0e0;border-left:1px solid #cfcfcf"></div>
</div>
<div class="a" style="left:1210px;top:629px;width:114px;height:32px;border:1px solid #cfcfcf;border-radius:2px;overflow:hidden;background:#e0e0e0">
<div class="a" style="left:-1px;top:0;width:29px;height:30px;background:#e8e8e8;border-left:0px solid #cfcfcf"></div>
<div class="a" style="left:28px;top:0;width:28px;height:30px;background:#e8e8e8;border-left:1px solid #cfcfcf"></div>
<div class="a" style="left:56px;top:0;width:29px;height:30px;background:#e0e0e0;border-left:1px solid #cfcfcf"></div>
<div class="a" style="left:85px;top:0;width:28px;height:30px;background:#e0e0e0;border-left:1px solid #cfcfcf"></div>
</div>
<svg style="left:972px;top:638px" width="16" height="16" viewBox="0 0 16 16"><path d="M1 15 L2 11 L11.5 1.5 L14.5 4.5 L5 14 Z" fill="#111"/><path d="M2.3 12 L4 13.7" stroke="#e0e0e0" stroke-width="0.8"/><path d="M10.5 2.5 L13.5 5.5" stroke="#e0e0e0" stroke-width="0.8"/></svg>
<svg style="left:1000px;top:639px" width="16" height="14" viewBox="0 0 16 14"><rect x="0" y="2" width="16" height="10" rx="5" fill="#111"/><circle cx="11" cy="7" r="3.3" fill="#fff"/></svg>
<svg style="left:1030px;top:638px" width="13" height="15" viewBox="0 0 13 15"><path d="M0.5 2.6 H12 " stroke="#111" stroke-width="1.3"/><path d="M4.3 2.3 V0.8 H8.2 V2.3" fill="none" stroke="#111" stroke-width="1.1"/><path d="M1.6 3.2 V13.6 Q1.6 14.3 2.3 14.3 H10.2 Q10.9 14.3 10.9 13.6 V3.2" fill="none" stroke="#111" stroke-width="1.3"/><path d="M4.8 4.8 V12.5 M7.7 4.8 V12.5" stroke="#111" stroke-width="1.1"/></svg>
<svg style="left:1067px;top:639px" width="7" height="13" viewBox="0 0 7 13"><rect x="2" y="1" width="3" height="2.2" fill="#111"/><path d="M0.5 4.3 H5 V11 H6.5 V13 H0.5 V11 H2 V6.3 H0.5 Z" fill="#111"/></svg>
<svg style="left:1091px;top:638px" width="16" height="16" viewBox="0 0 16 16"><path d="M3.2 4.2 A6 6 0 1 1 2.6 10.5" fill="none" stroke="#111" stroke-width="1.6"/><path d="M0.5 1.8 L1.2 6.8 L5.6 5.4 Z" fill="#111"/><path d="M8 4.5 V8.5 H5.5" fill="none" stroke="#111" stroke-width="1.5"/></svg>
<svg style="left:1122px;top:641px" width="10" height="10" viewBox="0 0 10 10"><path d="M5 0 V10 M0 5 H10" stroke="#111" stroke-width="2.1"/></svg>
<svg style="left:1150.5px;top:642.6px" width="9.5" height="7" viewBox="0 0 9.5 7"><path d="M0 6.5 L4.75 0 L9.5 6.5 Z" fill="#111"/></svg>
<svg style="left:1179px;top:643px" width="10" height="8" viewBox="0 0 10 8"><path d="M0 0 L4.75 7 L9.5 0 Z" fill="#111"/></svg>
<svg style="left:1276px;top:639px" width="11" height="15" viewBox="0 0 11 15"><rect x="0.8" y="1.6" width="9" height="12.6" rx="0.6" fill="none" stroke="#111" stroke-width="1.3"/><path d="M3 1.6 H7.6 L6.5 3 H4.1 Z" fill="#111"/><circle cx="5.3" cy="1" r="0.8" fill="#111"/></svg>
<svg style="left:1304px;top:638px" width="14" height="16" viewBox="0 0 14 16"><ellipse cx="2.6" cy="2.6" rx="1.8" ry="2" fill="none" stroke="#111" stroke-width="1.3"/><ellipse cx="2.6" cy="13.4" rx="1.8" ry="2" fill="none" stroke="#111" stroke-width="1.3"/><path d="M3.5 4.3 L5 8 L3.5 11.7" fill="none" stroke="#111" stroke-width="1.6"/><path d="M5 8 L12.5 3.5" stroke="#111" stroke-width="2.3" stroke-linecap="round"/><path d="M5 8 L12.5 12.2" stroke="#111" stroke-width="2.3" stroke-linecap="round"/><circle cx="5.2" cy="8" r="0.6" fill="#ddd"/></svg>
<svg style="left:1336.5px;top:638px" width="15.6" height="16" viewBox="0 0 15.6 16"><rect x="0" y="0" width="15.6" height="5.3" fill="#000"/><rect x="0" y="5.3" width="15.6" height="5.4" fill="#e20c17"/><rect x="0" y="10.7" width="15.6" height="5.3" fill="#fdcb2c"/></svg>
<div class="t" style="left:1357px;top:638.55px;font-size:13px;color:#222;font-weight:normal;letter-spacing:0.2px;">Deutsch (Standard)</div>
<div class="a" style="left:539px;top:667px;width:1037px;height:1.3px;background:#d6d6d6;"></div>
<svg style="left:552.3px;top:683px" width="17" height="14" viewBox="0 0 17 14"><rect x="6" y="0" width="4.6" height="4.2" fill="#6fa6ea"/><rect x="7.3" y="1.2" width="2" height="1.8" fill="#c9def8"/><path d="M2.6 7.6 V6.3 H13.9 V7.6 M8.3 5.2 V6.3" fill="none" stroke="#666" stroke-width="0.7"/><rect x="0" y="9" width="4.6" height="4.2" fill="#5cb85c"/><rect x="6" y="9" width="4.6" height="4.2" fill="#47a447"/><rect x="11.9" y="9" width="4.6" height="4.2" fill="#2d8a2d"/><rect x="1.5" y="10.3" width="1.6" height="1.6" fill="#bfe6bf"/><rect x="7.5" y="10.3" width="1.6" height="1.6" fill="#9fd69f"/><rect x="13.4" y="10.3" width="1.6" height="1.6" fill="#6fbf6f"/></svg>
<div class="t" style="left:581px;top:682.55px;font-size:13px;color:#222;font-weight:normal;letter-spacing:0.52px;">1/2015</div>
<div class="a" style="left:965px;top:673px;width:86px;height:32px;border:1px solid #cfcfcf;border-radius:2px;overflow:hidden;background:#e0e0e0">
<div class="a" style="left:-1px;top:0;width:29px;height:30px;background:#e0e0e0;border-left:0px solid #cfcfcf"></div>
<div class="a" style="left:28px;top:0;width:28px;height:30px;background:#e0e0e0;border-left:1px solid #cfcfcf"></div>
<div class="a" style="left:56px;top:0;width:29px;height:30px;background:#e0e0e0;border-left:1px solid #cfcfcf"></div>
</div>
<div class="a" style="left:1055px;top:673px;width:143px;height:32px;border:1px solid #cfcfcf;border-radius:2px;overflow:hidden;background:#e0e0e0">
<div class="a" style="left:-1px;top:0;width:29px;height:30px;background:#e0e0e0;border-left:0px solid #cfcfcf"></div>
<div class="a" style="left:28px;top:0;width:28px;height:30px;background:#e0e0e0;border-left:1px solid #cfcfcf"></div>
<div class="a" style="left:56px;top:0;width:29px;height:30px;background:#e0e0e0;border-left:1px solid #cfcfcf"></div>
<div class="a" style="left:85px;top:0;width:28px;height:30px;background:#e0e0e0;border-left:1px solid #cfcfcf"></div>
<div class="a" style="left:113px;top:0;width:29px;height:30px;background:#e0e0e0;border-left:1px solid #cfcfcf"></div>
</div>
<div class="a" style="left:1210px;top:673px;width:114px;height:32px;border:1px solid #cfcfcf;border-radius:2px;overflow:hidden;background:#e0e0e0">
<div class="a" style="left:-1px;top:0;width:29px;height:30px;background:#e8e8e8;border-left:0px solid #cfcfcf"></div>
<div class="a" style="left:28px;top:0;width:28px;height:30px;background:#e8e8e8;border-left:1px solid #cfcfcf"></div>
<div class="a" style="left:56px;top:0;width:29px;height:30px;background:#e0e0e0;border-left:1px solid #cfcfcf"></div>
<div class="a" style="left:85px;top:0;width:28px;height:30px;background:#e0e0e0;border-left:1px solid #cfcfcf"></div>
</div>
<svg style="left:972px;top:682px" width="16" height="16" viewBox="0 0 16 16"><path d="M1 15 L2 11 L11.5 1.5 L14.5 4.5 L5 14 Z" fill="#111"/><path d="M2.3 12 L4 13.7" stroke="#e0e0e0" stroke-width="0.8"/><path d="M10.5 2.5 L13.5 5.5" stroke="#e0e0e0" stroke-width="0.8"/></svg>
<svg style="left:1000px;top:683px" width="16" height="14" viewBox="0 0 16 14"><rect x="0" y="2" width="16" height="10" rx="5" fill="#111"/><circle cx="11" cy="7" r="3.3" fill="#fff"/></svg>
<svg style="left:1030px;top:682px" width="13" height="15" viewBox="0 0 13 15"><path d="M0.5 2.6 H12 " stroke="#111" stroke-width="1.3"/><path d="M4.3 2.3 V0.8 H8.2 V2.3" fill="none" stroke="#111" stroke-width="1.1"/><path d="M1.6 3.2 V13.6 Q1.6 14.3 2.3 14.3 H10.2 Q10.9 14.3 10.9 13.6 V3.2" fill="none" stroke="#111" stroke-width="1.3"/><path d="M4.8 4.8 V12.5 M7.7 4.8 V12.5" stroke="#111" stroke-width="1.1"/></svg>
<svg style="left:1067px;top:683px" width="7" height="13" viewBox="0 0 7 13"><rect x="2" y="1" width="3" height="2.2" fill="#111"/><path d="M0.5 4.3 H5 V11 H6.5 V13 H0.5 V11 H2 V6.3 H0.5 Z" fill="#111"/></svg>
<svg style="left:1091px;top:682px" width="16" height="16" viewBox="0 0 16 16"><path d="M3.2 4.2 A6 6 0 1 1 2.6 10.5" fill="none" stroke="#111" stroke-width="1.6"/><path d="M0.5 1.8 L1.2 6.8 L5.6 5.4 Z" fill="#111"/><path d="M8 4.5 V8.5 H5.5" fill="none" stroke="#111" stroke-width="1.5"/></svg>
<svg style="left:1122px;top:685px" width="10" height="10" viewBox="0 0 10 10"><path d="M5 0 V10 M0 5 H10" stroke="#111" stroke-width="2.1"/></svg>
<svg style="left:1150.5px;top:686.6px" width="9.5" height="7" viewBox="0 0 9.5 7"><path d="M0 6.5 L4.75 0 L9.5 6.5 Z" fill="#111"/></svg>
<svg style="left:1179px;top:687px" width="10" height="8" viewBox="0 0 10 8"><path d="M0 0 L4.75 7 L9.5 0 Z" fill="#111"/></svg>
<svg style="left:1276px;top:683px" width="11" height="15" viewBox="0 0 11 15"><rect x="0.8" y="1.6" width="9" height="12.6" rx="0.6" fill="none" stroke="#111" stroke-width="1.3"/><path d="M3 1.6 H7.6 L6.5 3 H4.1 Z" fill="#111"/><circle cx="5.3" cy="1" r="0.8" fill="#111"/></svg>
<svg style="left:1304px;top:682px" width="14" height="16" viewBox="0 0 14 16"><ellipse cx="2.6" cy="2.6" rx="1.8" ry="2" fill="none" stroke="#111" stroke-width="1.3"/><ellipse cx="2.6" cy="13.4" rx="1.8" ry="2" fill="none" stroke="#111" stroke-width="1.3"/><path d="M3.5 4.3 L5 8 L3.5 11.7" fill="none" stroke="#111" stroke-width="1.6"/><path d="M5 8 L12.5 3.5" stroke="#111" stroke-width="2.3" stroke-linecap="round"/><path d="M5 8 L12.5 12.2" stroke="#111" stroke-width="2.3" stroke-linecap="round"/><circle cx="5.2" cy="8" r="0.6" fill="#ddd"/></svg>
<svg style="left:1336.5px;top:682px" width="15.6" height="16" viewBox="0 0 15.6 16"><rect x="0" y="0" width="15.6" height="5.3" fill="#000"/><rect x="0" y="5.3" width="15.6" height="5.4" fill="#e20c17"/><rect x="0" y="10.7" width="15.6" height="5.3" fill="#fdcb2c"/></svg>
<div class="t" style="left:1357px;top:682.55px;font-size:13px;color:#222;font-weight:normal;letter-spacing:0.2px;">Deutsch (Standard)</div>
<div class="a" style="left:539px;top:711px;width:1037px;height:1.3px;background:#d6d6d6;"></div>
<svg style="left:552.3px;top:727px" width="17" height="14" viewBox="0 0 17 14"><rect x="6" y="0" width="4.6" height="4.2" fill="#6fa6ea"/><rect x="7.3" y="1.2" width="2" height="1.8" fill="#c9def8"/><path d="M2.6 7.6 V6.3 H13.9 V7.6 M8.3 5.2 V6.3" fill="none" stroke="#666" stroke-width="0.7"/><rect x="0" y="9" width="4.6" height="4.2" fill="#5cb85c"/><rect x="6" y="9" width="4.6" height="4.2" fill="#47a447"/><rect x="11.9" y="9" width="4.6" height="4.2" fill="#2d8a2d"/><rect x="1.5" y="10.3" width="1.6" height="1.6" fill="#bfe6bf"/><rect x="7.5" y="10.3" width="1.6" height="1.6" fill="#9fd69f"/><rect x="13.4" y="10.3" width="1.6" height="1.6" fill="#6fbf6f"/></svg>
<div class="t" style="left:581px;top:726.55px;font-size:13px;color:#222;font-weight:normal;letter-spacing:0.52px;">2/2014</div>
<div class="a" style="left:965px;top:717px;width:86px;height:32px;border:1px solid #cfcfcf;border-radius:2px;overflow:hidden;background:#e0e0e0">
<div class="a" style="left:-1px;top:0;width:29px;height:30px;background:#e0e0e0;border-left:0px solid #cfcfcf"></div>
<div class="a" style="left:28px;top:0;width:28px;height:30px;background:#e0e0e0;border-left:1px solid #cfcfcf"></div>
<div class="a" style="left:56px;top:0;width:29px;height:30px;background:#e0e0e0;border-left:1px solid #cfcfcf"></div>
</div>
<div class="a" style="left:1055px;top:717px;width:143px;height:32px;border:1px solid #cfcfcf;border-radius:2px;overflow:hidden;background:#e0e0e0">
<div class="a" style="left:-1px;top:0;width:29px;height:30px;background:#e0e0e0;border-left:0px solid #cfcfcf"></div>
<div class="a" style="left:28px;top:0;width:28px;height:30px;background:#e0e0e0;border-left:1px solid #cfcfcf"></div>
<div class="a" style="left:56px;top:0;width:29px;height:30px;background:#e0e0e0;border-left:1px solid #cfcfcf"></div>
<div class="a" style="left:85px;top:0;width:28px;height:30px;background:#e0e0e0;border-left:1px solid #cfcfcf"></div>
<div class="a" style="left:113px;top:0;width:29px;height:30px;background:#e0e0e0;border-left:1px solid #cfcfcf"></div>
</div>
<div class="a" style="left:1210px;top:717px;width:114px;height:32px;border:1px solid #cfcfcf;border-radius:2px;overflow:hidden;background:#e0e0e0">
<div class="a" style="left:-1px;top:0;width:29px;height:30px;background:#e8e8e8;border-left:0px solid #cfcfcf"></div>
<div class="a" style="left:28px;top:0;width:28px;height:30px;background:#e8e8e8;border-left:1px solid #cfcfcf"></div>
<div class="a" style="left:56px;top:0;width:29px;height:30px;background:#e0e0e0;border-left:1px solid #cfcfcf"></div>
<div class="a" style="left:85px;top:0;width:28px;height:30px;background:#e0e0e0;border-left:1px solid #cfcfcf"></div>
</div>
<svg style="left:972px;top:726px" width="16" height="16" viewBox="0 0 16 16"><path d="M1 15 L2 11 L11.5 1.5 L14.5 4.5 L5 14 Z" fill="#111"/><path d="M2.3 12 L4 13.7" stroke="#e0e0e0" stroke-width="0.8"/><path d="M10.5 2.5 L13.5 5.5" stroke="#e0e0e0" stroke-width="0.8"/></svg>
<svg style="left:1000px;top:727px" width="16" height="14" viewBox="0 0 16 14"><rect x="0" y="2" width="16" height="10" rx="5" fill="#111"/><circle cx="11" cy="7" r="3.3" fill="#fff"/></svg>
<svg style="left:1030px;top:726px" width="13" height="15" viewBox="0 0 13 15"><path d="M0.5 2.6 H12 " stroke="#111" stroke-width="1.3"/><path d="M4.3 2.3 V0.8 H8.2 V2.3" fill="none" stroke="#111" stroke-width="1.1"/><path d="M1.6 3.2 V13.6 Q1.6 14.3 2.3 14.3 H10.2 Q10.9 14.3 10.9 13.6 V3.2" fill="none" stroke="#111" stroke-width="1.3"/><path d="M4.8 4.8 V12.5 M7.7 4.8 V12.5" stroke="#111" stroke-width="1.1"/></svg>
<svg style="left:1067px;top:727px" width="7" height="13" viewBox="0 0 7 13"><rect x="2" y="1" width="3" height="2.2" fill="#111"/><path d="M0.5 4.3 H5 V11 H6.5 V13 H0.5 V11 H2 V6.3 H0.5 Z" fill="#111"/></svg>
<svg style="left:1091px;top:726px" width="16" height="16" viewBox="0 0 16 16"><path d="M3.2 4.2 A6 6 0 1 1 2.6 10.5" fill="none" stroke="#111" stroke-width="1.6"/><path d="M0.5 1.8 L1.2 6.8 L5.6 5.4 Z" fill="#111"/><path d="M8 4.5 V8.5 H5.5" fill="none" stroke="#111" stroke-width="1.5"/></svg>
<svg style="left:1122px;top:729px" width="10" height="10" viewBox="0 0 10 10"><path d="M5 0 V10 M0 5 H10" stroke="#111" stroke-width="2.1"/></svg>
<svg style="left:1150.5px;top:730.6px" width="9.5" height="7" viewBox="0 0 9.5 7"><path d="M0 6.5 L4.75 0 L9.5 6.5 Z" fill="#111"/></svg>
<svg style="left:1179px;top:731px" width="10" height="8" viewBox="0 0 10 8"><path d="M0 0 L4.75 7 L9.5 0 Z" fill="#111"/></svg>
<svg style="left:1276px;top:727px" width="11" height="15" viewBox="0 0 11 15"><rect x="0.8" y="1.6" width="9" height="12.6" rx="0.6" fill="none" stroke="#111" stroke-width="1.3"/><path d="M3 1.6 H7.6 L6.5 3 H4.1 Z" fill="#111"/><circle cx="5.3" cy="1" r="0.8" fill="#111"/></svg>
<svg style="left:1304px;top:726px" width="14" height="16" viewBox="0 0 14 16"><ellipse cx="2.6" cy="2.6" rx="1.8" ry="2" fill="none" stroke="#111" stroke-width="1.3"/><ellipse cx="2.6" cy="13.4" rx="1.8" ry="2" fill="none" stroke="#111" stroke-width="1.3"/><path d="M3.5 4.3 L5 8 L3.5 11.7" fill="none" stroke="#111" stroke-width="1.6"/><path d="M5 8 L12.5 3.5" stroke="#111" stroke-width="2.3" stroke-linecap="round"/><path d="M5 8 L12.5 12.2" stroke="#111" stroke-width="2.3" stroke-linecap="round"/><circle cx="5.2" cy="8" r="0.6" fill="#ddd"/></svg>
<svg style="left:1336.5px;top:726px" width="15.6" height="16" viewBox="0 0 15.6 16"><rect x="0" y="0" width="15.6" height="5.3" fill="#000"/><rect x="0" y="5.3" width="15.6" height="5.4" fill="#e20c17"/><rect x="0" y="10.7" width="15.6" height="5.3" fill="#fdcb2c"/></svg>
<div class="t" style="left:1357px;top:726.55px;font-size:13px;color:#222;font-weight:normal;letter-spacing:0.2px;">Deutsch (Standard)</div>
<div class="a" style="left:539px;top:755px;width:1037px;height:1.3px;background:#d6d6d6;"></div>
<svg style="left:552.3px;top:771px" width="17" height="14" viewBox="0 0 17 14"><rect x="6" y="0" width="4.6" height="4.2" fill="#6fa6ea"/><rect x="7.3" y="1.2" width="2" height="1.8" fill="#c9def8"/><path d="M2.6 7.6 V6.3 H13.9 V7.6 M8.3 5.2 V6.3" fill="none" stroke="#666" stroke-width="0.7"/><rect x="0" y="9" width="4.6" height="4.2" fill="#5cb85c"/><rect x="6" y="9" width="4.6" height="4.2" fill="#47a447"/><rect x="11.9" y="9" width="4.6" height="4.2" fill="#2d8a2d"/><rect x="1.5" y="10.3" width="1.6" height="1.6" fill="#bfe6bf"/><rect x="7.5" y="10.3" width="1.6" height="1.6" fill="#9fd69f"/><rect x="13.4" y="10.3" width="1.6" height="1.6" fill="#6fbf6f"/></svg>
<div class="t" style="left:581px;top:770.55px;font-size:13px;color:#222;font-weight:normal;letter-spacing:0.52px;">1/2014</div>
<div class="a" style="left:965px;top:761px;width:86px;height:32px;border:1px solid #cfcfcf;border-radius:2px;overflow:hidden;background:#e0e0e0">
<div class="a" style="left:-1px;top:0;width:29px;height:30px;background:#e0e0e0;border-left:0px solid #cfcfcf"></div>
<div class="a" style="left:28px;top:0;width:28px;height:30px;background:#e0e0e0;border-left:1px solid #cfcfcf"></div>
<div class="a" style="left:56px;top:0;width:29px;height:30px;background:#e0e0e0;border-left:1px solid #cfcfcf"></div>
</div>
<div class="a" style="left:1055px;top:761px;width:143px;height:32px;border:1px solid #cfcfcf;border-radius:2px;overflow:hidden;background:#e0e0e0">
<div class="a" style="left:-1px;top:0;width:29px;height:30px;background:#e0e0e0;border-left:0px solid #cfcfcf"></div>
<div class="a" style="left:28px;top:0;width:28px;height:30px;background:#e0e0e0;border-left:1px solid #cfcfcf"></div>
<div class="a" style="left:56px;top:0;width:29px;height:30px;background:#e0e0e0;border-left:1px solid #cfcfcf"></div>
<div class="a" style="left:85px;top:0;width:28px;height:30px;background:#e0e0e0;border-left:1px solid #cfcfcf"></div>
<div class="a" style="left:113px;top:0;width:29px;height:30px;background:#e0e0e0;border-left:1px solid #cfcfcf"></div>
</div>
<div class="a" style="left:1210px;top:761px;width:114px;height:32px;border:1px solid #cfcfcf;border-radius:2px;overflow:hidden;background:#e0e0e0">
<div class="a" style="left:-1px;top:0;width:29px;height:30px;background:#e8e8e8;border-left:0px solid #cfcfcf"></div>
<div class="a" style="left:28px;top:0;width:28px;height:30px;background:#e8e8e8;border-left:1px solid #cfcfcf"></div>
<div class="a" style="left:56px;top:0;width:29px;height:30px;background:#e0e0e0;border-left:1px solid #cfcfcf"></div>
<div class="a" style="left:85px;top:0;width:28px;height:30px;background:#e0e0e0;border-left:1px solid #cfcfcf"></div>
</div>
<svg style="left:972px;top:770px" width="16" height="16" viewBox="0 0 16 16"><path d="M1 15 L2 11 L11.5 1.5 L14.5 4.5 L5 14 Z" fill="#111"/><path d="M2.3 12 L4 13.7" stroke="#e0e0e0" stroke-width="0.8"/><path d="M10.5 2.5 L13.5 5.5" stroke="#e0e0e0" stroke-width="0.8"/></svg>
<svg style="left:1000px;top:771px" width="16" height="14" viewBox="0 0 16 14"><rect x="0" y="2" width="16" height="10" rx="5" fill="#111"/><circle cx="11" cy="7" r="3.3" fill="#fff"/></svg>
<svg style="left:1030px;top:770px" width="13" height="15" viewBox="0 0 13 15"><path d="M0.5 2.6 H12 " stroke="#111" stroke-width="1.3"/><path d="M4.3 2.3 V0.8 H8.2 V2.3" fill="none" stroke="#111" stroke-width="1.1"/><path d="M1.6 3.2 V13.6 Q1.6 14.3 2.3 14.3 H10.2 Q10.9 14.3 10.9 13.6 V3.2" fill="none" stroke="#111" stroke-width="1.3"/><path d="M4.8 4.8 V12.5 M7.7 4.8 V12.5" stroke="#111" stroke-width="1.1"/></svg>
<svg style="left:1067px;top:771px" width="7" height="13" viewBox="0 0 7 13"><rect x="2" y="1" width="3" height="2.2" fill="#111"/><path d="M0.5 4.3 H5 V11 H6.5 V13 H0.5 V11 H2 V6.3 H0.5 Z" fill="#111"/></svg>
<svg style="left:1091px;top:770px" width="16" height="16" viewBox="0 0 16 16"><path d="M3.2 4.2 A6 6 0 1 1 2.6 10.5" fill="none" stroke="#111" stroke-width="1.6"/><path d="M0.5 1.8 L1.2 6.8 L5.6 5.4 Z" fill="#111"/><path d="M8 4.5 V8.5 H5.5" fill="none" stroke="#111" stroke-width="1.5"/></svg>
<svg style="left:1122px;top:773px" width="10" height="10" viewBox="0 0 10 10"><path d="M5 0 V10 M0 5 H10" stroke="#111" stroke-width="2.1"/></svg>
<svg style="left:1150.5px;top:774.6px" width="9.5" height="7" viewBox="0 0 9.5 7"><path d="M0 6.5 L4.75 0 L9.5 6.5 Z" fill="#111"/></svg>
<svg style="left:1179px;top:775px" width="10" height="8" viewBox="0 0 10 8"><path d="M0 0 L4.75 7 L9.5 0 Z" fill="#111"/></svg>
<svg style="left:1276px;top:771px" width="11" height="15" viewBox="0 0 11 15"><rect x="0.8" y="1.6" width="9" height="12.6" rx="0.6" fill="none" stroke="#111" stroke-width="1.3"/><path d="M3 1.6 H7.6 L6.5 3 H4.1 Z" fill="#111"/><circle cx="5.3" cy="1" r="0.8" fill="#111"/></svg>
<svg style="left:1304px;top:770px" width="14" height="16" viewBox="0 0 14 16"><ellipse cx="2.6" cy="2.6" rx="1.8" ry="2" fill="none" stroke="#111" stroke-width="1.3"/><ellipse cx="2.6" cy="13.4" rx="1.8" ry="2" fill="none" stroke="#111" stroke-width="1.3"/><path d="M3.5 4.3 L5 8 L3.5 11.7" fill="none" stroke="#111" stroke-width="1.6"/><path d="M5 8 L12.5 3.5" stroke="#111" stroke-width="2.3" stroke-linecap="round"/><path d="M5 8 L12.5 12.2" stroke="#111" stroke-width="2.3" stroke-linecap="round"/><circle cx="5.2" cy="8" r="0.6" fill="#ddd"/></svg>
<svg style="left:1336.5px;top:770px" width="15.6" height="16" viewBox="0 0 15.6 16"><rect x="0" y="0" width="15.6" height="5.3" fill="#000"/><rect x="0" y="5.3" width="15.6" height="5.4" fill="#e20c17"/><rect x="0" y="10.7" width="15.6" height="5.3" fill="#fdcb2c"/></svg>
<div class="t" style="left:1357px;top:770.55px;font-size:13px;color:#222;font-weight:normal;letter-spacing:0.2px;">Deutsch (Standard)</div>
<div class="a" style="left:539px;top:799px;width:1037px;height:1.3px;background:#d6d6d6;"></div>
<svg style="left:552.3px;top:815px" width="17" height="14" viewBox="0 0 17 14"><rect x="6" y="0" width="4.6" height="4.2" fill="#6fa6ea"/><rect x="7.3" y="1.2" width="2" height="1.8" fill="#c9def8"/><path d="M2.6 7.6 V6.3 H13.9 V7.6 M8.3 5.2 V6.3" fill="none" stroke="#666" stroke-width="0.7"/><rect x="0" y="9" width="4.6" height="4.2" fill="#5cb85c"/><rect x="6" y="9" width="4.6" height="4.2" fill="#47a447"/><rect x="11.9" y="9" width="4.6" height="4.2" fill="#2d8a2d"/><rect x="1.5" y="10.3" width="1.6" height="1.6" fill="#bfe6bf"/><rect x="7.5" y="10.3" width="1.6" height="1.6" fill="#9fd69f"/><rect x="13.4" y="10.3" width="1.6" height="1.6" fill="#6fbf6f"/></svg>
<div class="t" style="left:581px;top:814.55px;font-size:13px;color:#222;font-weight:normal;letter-spacing:0.52px;">2/2013</div>
<div class="a" style="left:965px;top:805px;width:86px;height:32px;border:1px solid #cfcfcf;border-radius:2px;overflow:hidden;background:#e0e0e0">
<div class="a" style="left:-1px;top:0;width:29px;height:30px;background:#e0e0e0;border-left:0px solid #cfcfcf"></div>
<div class="a" style="left:28px;top:0;width:28px;height:30px;background:#e0e0e0;border-left:1px solid #cfcfcf"></div>
<div class="a" style="left:56px;top:0;width:29px;height:30px;background:#e0e0e0;border-left:1px solid #cfcfcf"></div>
</div>
<div class="a" style="left:1055px;top:805px;width:143px;height:32px;border:1px solid #cfcfcf;border-radius:2px;overflow:hidden;background:#e0e0e0">
<div class="a" style="left:-1px;top:0;width:29px;height:30px;background:#e0e0e0;border-left:0px solid #cfcfcf"></div>
<div class="a" style="left:28px;top:0;width:28px;height:30px;background:#e0e0e0;border-left:1px solid #cfcfcf"></div>
<div class="a" style="left:56px;top:0;width:29px;height:30px;background:#e0e0e0;border-left:1px solid #cfcfcf"></div>
<div class="a" style="left:85px;top:0;width:28px;height:30px;background:#e0e0e0;border-left:1px solid #cfcfcf"></div>
<div class="a" style="left:113px;top:0;width:29px;height:30px;background:#e0e0e0;border-left:1px solid #cfcfcf"></div>
</div>
<div class="a" style="left:1210px;top:805px;width:114px;height:32px;border:1px solid #cfcfcf;border-radius:2px;overflow:hidden;background:#e0e0e0">
<div class="a" style="left:-1px;top:0;width:29px;height:30px;background:#e8e8e8;border-left:0px solid #cfcfcf"></div>
<div class="a" style="left:28px;top:0;width:28px;height:30px;background:#e8e8e8;border-left:1px solid #cfcfcf"></div>
<div class="a" style="left:56px;top:0;width:29px;height:30px;background:#e0e0e0;border-left:1px solid #cfcfcf"></div>
<div class="a" style="left:85px;top:0;width:28px;height:30px;background:#e0e0e0;border-left:1px solid #cfcfcf"></div>
</div>
<svg style="left:972px;top:814px" width="16" height="16" viewBox="0 0 16 16"><path d="M1 15 L2 11 L11.5 1.5 L14.5 4.5 L5 14 Z" fill="#111"/><path d="M2.3 12 L4 13.7" stroke="#e0e0e0" stroke-width="0.8"/><path d="M10.5 2.5 L13.5 5.5" stroke="#e0e0e0" stroke-width="0.8"/></svg>
<svg style="left:1000px;top:815px" width="16" height="14" viewBox="0 0 16 14"><rect x="0" y="2" width="16" height="10" rx="5" fill="#111"/><circle cx="11" cy="7" r="3.3" fill="#fff"/></svg>
<svg style="left:1030px;top:814px" width="13" height="15" viewBox="0 0 13 15"><path d="M0.5 2.6 H12 " stroke="#111" stroke-width="1.3"/><path d="M4.3 2.3 V0.8 H8.2 V2.3" fill="none" stroke="#111" stroke-width="1.1"/><path d="M1.6 3.2 V13.6 Q1.6 14.3 2.3 14.3 H10.2 Q10.9 14.3 10.9 13.6 V3.2" fill="none" stroke="#111" stroke-width="1.3"/><path d="M4.8 4.8 V12.5 M7.7 4.8 V12.5" stroke="#111" stroke-width="1.1"/></svg>
<svg style="left:1067px;top:815px" width="7" height="13" viewBox="0 0 7 13"><rect x="2" y="1" width="3" height="2.2" fill="#111"/><path d="M0.5 4.3 H5 V11 H6.5 V13 H0.5 V11 H2 V6.3 H0.5 Z" fill="#111"/></svg>
<svg style="left:1091px;top:814px" width="16" height="16" viewBox="0 0 16 16"><path d="M3.2 4.2 A6 6 0 1 1 2.6 10.5" fill="none" stroke="#111" stroke-width="1.6"/><path d="M0.5 1.8 L1.2 6.8 L5.6 5.4 Z" fill="#111"/><path d="M8 4.5 V8.5 H5.5" fill="none" stroke="#111" stroke-width="1.5"/></svg>
<svg style="left:1122px;top:817px" width="10" height="10" viewBox="0 0 10 10"><path d="M5 0 V10 M0 5 H10" stroke="#111" stroke-width="2.1"/></svg>
<svg style="left:1150.5px;top:818.6px" width="9.5" height="7" viewBox="0 0 9.5 7"><path d="M0 6.5 L4.75 0 L9.5 6.5 Z" fill="#111"/></svg>
<svg style="left:1179px;top:819px" width="10" height="8" viewBox="0 0 10 8"><path d="M0 0 L4.75 7 L9.5 0 Z" fill="#111"/></svg>
<svg style="left:1276px;top:815px" width="11" height="15" viewBox="0 0 11 15"><rect x="0.8" y="1.6" width="9" height="12.6" rx="0.6" fill="none" stroke="#111" stroke-width="1.3"/><path d="M3 1.6 H7.6 L6.5 3 H4.1 Z" fill="#111"/><circle cx="5.3" cy="1" r="0.8" fill="#111"/></svg>
<svg style="left:1304px;top:814px" width="14" height="16" viewBox="0 0 14 16"><ellipse cx="2.6" cy="2.6" rx="1.8" ry="2" fill="none" stroke="#111" stroke-width="1.3"/><ellipse cx="2.6" cy="13.4" rx="1.8" ry="2" fill="none" stroke="#111" stroke-width="1.3"/><path d="M3.5 4.3 L5 8 L3.5 11.7" fill="none" stroke="#111" stroke-width="1.6"/><path d="M5 8 L12.5 3.5" stroke="#111" stroke-width="2.3" stroke-linecap="round"/><path d="M5 8 L12.5 12.2" stroke="#111" stroke-width="2.3" stroke-linecap="round"/><circle cx="5.2" cy="8" r="0.6" fill="#ddd"/></svg>
<svg style="left:1336.5px;top:814px" width="15.6" height="16" viewBox="0 0 15.6 16"><rect x="0" y="0" width="15.6" height="5.3" fill="#000"/><rect x="0" y="5.3" width="15.6" height="5.4" fill="#e20c17"/><rect x="0" y="10.7" width="15.6" height="5.3" fill="#fdcb2c"/></svg>
<div class="t" style="left:1357px;top:814.55px;font-size:13px;color:#222;font-weight:normal;letter-spacing:0.2px;">Deutsch (Standard)</div>
<div class="a" style="left:539px;top:843px;width:1037px;height:1.3px;background:#d6d6d6;"></div>
<svg style="left:552.3px;top:859px" width="17" height="14" viewBox="0 0 17 14"><rect x="6" y="0" width="4.6" height="4.2" fill="#6fa6ea"/><rect x="7.3" y="1.2" width="2" height="1.8" fill="#c9def8"/><path d="M2.6 7.6 V6.3 H13.9 V7.6 M8.3 5.2 V6.3" fill="none" stroke="#666" stroke-width="0.7"/><rect x="0" y="9" width="4.6" height="4.2" fill="#5cb85c"/><rect x="6" y="9" width="4.6" height="4.2" fill="#47a447"/><rect x="11.9" y="9" width="4.6" height="4.2" fill="#2d8a2d"/><rect x="1.5" y="10.3" width="1.6" height="1.6" fill="#bfe6bf"/><rect x="7.5" y="10.3" width="1.6" height="1.6" fill="#9fd69f"/><rect x="13.4" y="10.3" width="1.6" height="1.6" fill="#6fbf6f"/></svg>
<div class="t" style="left:581px;top:858.55px;font-size:13px;color:#222;font-weight:normal;letter-spacing:0.52px;">1/2013</div>
<div class="a" style="left:965px;top:849px;width:86px;height:32px;border:1px solid #cfcfcf;border-radius:2px;overflow:hidden;background:#e0e0e0">
<div class="a" style="left:-1px;top:0;width:29px;height:30px;background:#e0e0e0;border-left:0px solid #cfcfcf"></div>
<div class="a" style="left:28px;top:0;width:28px;height:30px;background:#e0e0e0;border-left:1px solid #cfcfcf"></div>
<div class="a" style="left:56px;top:0;width:29px;height:30px;background:#e0e0e0;border-left:1px solid #cfcfcf"></div>
</div>
<div class="a" style="left:1055px;top:849px;width:143px;height:32px;border:1px solid #cfcfcf;border-radius:2px;overflow:hidden;background:#e0e0e0">
<div class="a" style="left:-1px;top:0;width:29px;height:30px;background:#e0e0e0;border-left:0px solid #cfcfcf"></div>
<div class="a" style="left:28px;top:0;width:28px;height:30px;background:#e0e0e0;border-left:1px solid #cfcfcf"></div>
<div class="a" style="left:56px;top:0;width:29px;height:30px;background:#e0e0e0;border-left:1px solid #cfcfcf"></div>
<div class="a" style="left:85px;top:0;width:28px;height:30px;background:#e0e0e0;border-left:1px solid #cfcfcf"></div>
<div class="a" style="left:113px;top:0;width:29px;height:30px;background:#e0e0e0;border-left:1px solid #cfcfcf"></div>
</div>
<div class="a" style="left:1210px;top:849px;width:114px;height:32px;border:1px solid #cfcfcf;border-radius:2px;overflow:hidden;background:#e0e0e0">
<div class="a" style="left:-1px;top:0;width:29px;height:30px;background:#e8e8e8;border-left:0px solid #cfcfcf"></div>
<div class="a" style="left:28px;top:0;width:28px;height:30px;background:#e8e8e8;border-left:1px solid #cfcfcf"></div>
<div class="a" style="left:56px;top:0;width:29px;height:30px;background:#e0e0e0;border-left:1px solid #cfcfcf"></div>
<div class="a" style="left:85px;top:0;width:28px;height:30px;background:#e0e0e0;border-left:1px solid #cfcfcf"></div>
</div>
<svg style="left:972px;top:858px" width="16" height="16" viewBox="0 0 16 16"><path d="M1 15 L2 11 L11.5 1.5 L14.5 4.5 L5 14 Z" fill="#111"/><path d="M2.3 12 L4 13.7" stroke="#e0e0e0" stroke-width="0.8"/><path d="M10.5 2.5 L13.5 5.5" stroke="#e0e0e0" stroke-width="0.8"/></svg>
<svg style="left:1000px;top:859px" width="16" height="14" viewBox="0 0 16 14"><rect x="0" y="2" width="16" height="10" rx="5" fill="#111"/><circle cx="11" cy="7" r="3.3" fill="#fff"/></svg>
<svg style="left:1030px;top:858px" width="13" height="15" viewBox="0 0 13 15"><path d="M0.5 2.6 H12 " stroke="#111" stroke-width="1.3"/><path d="M4.3 2.3 V0.8 H8.2 V2.3" fill="none" stroke="#111" stroke-width="1.1"/><path d="M1.6 3.2 V13.6 Q1.6 14.3 2.3 14.3 H10.2 Q10.9 14.3 10.9 13.6 V3.2" fill="none" stroke="#111" stroke-width="1.3"/><path d="M4.8 4.8 V12.5 M7.7 4.8 V12.5" stroke="#111" stroke-width="1.1"/></svg>
<svg style="left:1067px;top:859px" width="7" height="13" viewBox="0 0 7 13"><rect x="2" y="1" width="3" height="2.2" fill="#111"/><path d="M0.5 4.3 H5 V11 H6.5 V13 H0.5 V11 H2 V6.3 H0.5 Z" fill="#111"/></svg>
<svg style="left:1091px;top:858px" width="16" height="16" viewBox="0 0 16 16"><path d="M3.2 4.2 A6 6 0 1 1 2.6 10.5" fill="none" stroke="#111" stroke-width="1.6"/><path d="M0.5 1.8 L1.2 6.8 L5.6 5.4 Z" fill="#111"/><path d="M8 4.5 V8.5 H5.5" fill="none" stroke="#111" stroke-width="1.5"/></svg>
<svg style="left:1122px;top:861px" width="10" height="10" viewBox="0 0 10 10"><path d="M5 0 V10 M0 5 H10" stroke="#111" stroke-width="2.1"/></svg>
<svg style="left:1150.5px;top:862.6px" width="9.5" height="7" viewBox="0 0 9.5 7"><path d="M0 6.5 L4.75 0 L9.5 6.5 Z" fill="#111"/></svg>
<svg style="left:1179px;top:863px" width="10" height="8" viewBox="0 0 10 8"><path d="M0 0 L4.75 7 L9.5 0 Z" fill="#111"/></svg>
<svg style="left:1276px;top:859px" width="11" height="15" viewBox="0 0 11 15"><rect x="0.8" y="1.6" width="9" height="12.6" rx="0.6" fill="none" stroke="#111" stroke-width="1.3"/><path d="M3 1.6 H7.6 L6.5 3 H4.1 Z" fill="#111"/><circle cx="5.3" cy="1" r="0.8" fill="#111"/></svg>
<svg style="left:1304px;top:858px" width="14" height="16" viewBox="0 0 14 16"><ellipse cx="2.6" cy="2.6" rx="1.8" ry="2" fill="none" stroke="#111" stroke-width="1.3"/><ellipse cx="2.6" cy="13.4" rx="1.8" ry="2" fill="none" stroke="#111" stroke-width="1.3"/><path d="M3.5 4.3 L5 8 L3.5 11.7" fill="none" stroke="#111" stroke-width="1.6"/><path d="M5 8 L12.5 3.5" stroke="#111" stroke-width="2.3" stroke-linecap="round"/><path d="M5 8 L12.5 12.2" stroke="#111" stroke-width="2.3" stroke-linecap="round"/><circle cx="5.2" cy="8" r="0.6" fill="#ddd"/></svg>
<svg style="left:1336.5px;top:858px" width="15.6" height="16" viewBox="0 0 15.6 16"><rect x="0" y="0" width="15.6" height="5.3" fill="#000"/><rect x="0" y="5.3" width="15.6" height="5.4" fill="#e20c17"/><rect x="0" y="10.7" width="15.6" height="5.3" fill="#fdcb2c"/></svg>
<div class="t" style="left:1357px;top:858.55px;font-size:13px;color:#222;font-weight:normal;letter-spacing:0.2px;">Deutsch (Standard)</div>
</body></html>
